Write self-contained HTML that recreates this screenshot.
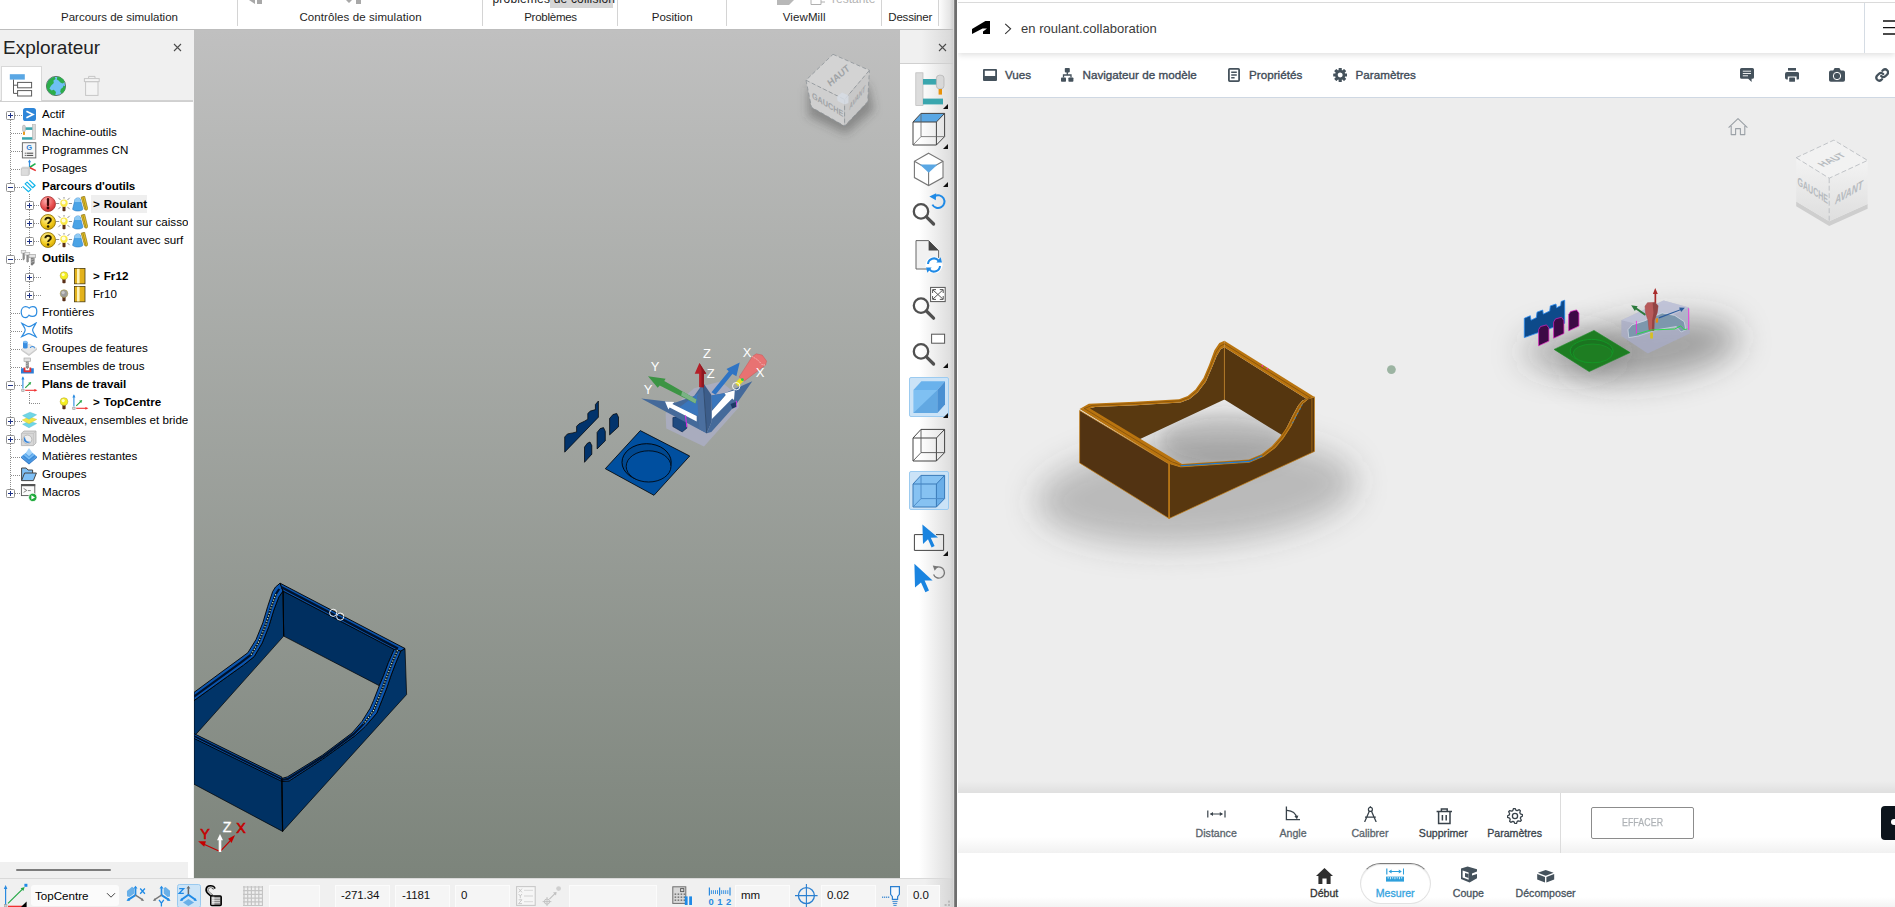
<!DOCTYPE html>
<html lang="fr">
<head>
<meta charset="utf-8">
<title>PowerMill - en roulant.collaboration</title>
<style>
*{box-sizing:border-box;margin:0;padding:0}
html,body{width:1895px;height:907px;overflow:hidden;background:#fff}
body{position:relative;font-family:"Liberation Sans","DejaVu Sans",sans-serif;font-size:12px;color:#000}
.abs{position:absolute}
.t{position:absolute;white-space:nowrap;line-height:1}
/* ---------- left application ---------- */
#ribbon{position:absolute;left:0;top:0;width:953px;height:30px;background:linear-gradient(90deg,#fff 0,#fff 938px,#dedede 953px);border-bottom:1px solid #bdbdbd;overflow:hidden}
#ribbon .sep{position:absolute;top:0;width:1px;height:26px;background:#d4d4d4}
#ribbon .lbl{position:absolute;top:10px;font-size:11.5px;line-height:14px;color:#1e1e1e;white-space:nowrap;text-align:center}
#ribbon .clip{position:absolute;top:-8.5px;font-size:12px;line-height:14px;white-space:nowrap}
#explorer{position:absolute;left:0;top:30px;width:194px;height:848px;background:#f0f0f0}
#tree{position:absolute;left:0;top:71px;width:193px;height:777px;background:#fff;border-top:1px solid #d0d0d0;overflow:hidden}
#viewport{position:absolute;left:194px;top:30px;width:706px;height:848px;background:linear-gradient(#c0c0c0,#7c847b);overflow:hidden}
#vtool{position:absolute;left:900px;top:30px;width:53px;height:848px;background:linear-gradient(90deg,#fff 0,#fff 36%,#dbdbdb 100%)}
#status{position:absolute;left:0;top:878px;width:953px;height:29px;background:linear-gradient(90deg,#f0f0f0 0,#f0f0f0 925px,#d6d6d6 953px);box-shadow:inset 0 1px 0 #d9d9d9}
#winedge{position:absolute;left:950px;top:0;width:8px;height:907px;background:linear-gradient(90deg,rgba(200,200,200,0) 0,rgba(200,200,200,.8) 50%,#6e6e6e 58%,#6e6e6e 88%,#fff 92%)}
/* ---------- right pane (viewer) ---------- */
#viewer{position:absolute;left:958px;top:0;width:937px;height:907px;background:#ededed;overflow:hidden;font-family:"Liberation Sans","DejaVu Sans",sans-serif}
#vhead{position:absolute;left:0;top:0;width:937px;height:53px;background:#fff;border-top:3px solid #fff;box-shadow:0 2px 6px rgba(0,0,0,.13);z-index:3}
#vbar{position:absolute;left:0;top:53px;width:937px;height:45px;background:#fff;border-bottom:1px solid #cfd8e3;z-index:2}
#canvas{position:absolute;left:0;top:98px;width:937px;height:695px;background:#ededed}
#mbar{position:absolute;left:0;top:793px;width:937px;height:60px;background:#fff;z-index:2}
#nav{position:absolute;left:0;top:853px;width:937px;height:54px;background:#fff;z-index:2}
.hd{position:absolute;height:1px;background-image:linear-gradient(90deg,#8c8c8c 50%,transparent 50%);background-size:2px 1px}
.vd{position:absolute;width:1px;background-image:linear-gradient(#8c8c8c 50%,transparent 50%);background-size:1px 2px}
.tt{position:absolute;white-space:nowrap;font-size:11.6px;line-height:18px;height:18px;color:#000;margin-top:-.5px}
.tt.b{font-weight:700;font-size:11.6px;letter-spacing:-.06px}
.sf{position:absolute;top:7px;height:23px;background:#f5f5f5;border:1px solid #fbfbfb;border-bottom:none;font-size:11.5px;line-height:19px;letter-spacing:-.1px;white-space:nowrap;color:#111}
.vb{font-size:11.65px;color:#3f4b57;-webkit-text-stroke:.35px #3f4b57;letter-spacing:.02px}
.mb{font-size:10.6px;text-align:center}
</style>
</head>
<body>

<!-- ================= LEFT: PowerMill ================= -->
<div id="ribbon">
  <div class="sep" style="left:237px"></div>
  <div class="sep" style="left:482px"></div>
  <div class="sep" style="left:617px"></div>
  <div class="sep" style="left:726px"></div>
  <div class="sep" style="left:881px"></div>
  <div class="sep" style="left:938px"></div>
  <div class="lbl" style="left:59.5px;width:120px">Parcours de simulation</div>
  <div class="lbl" style="left:295.5px;width:130px;letter-spacing:.09px">Contrôles de simulation</div>
  <div class="lbl" style="left:520.5px;width:60px;letter-spacing:-.25px">Problèmes</div>
  <div class="lbl" style="left:642.2px;width:60px">Position</div>
  <div class="lbl" style="left:774.2px;width:60px;letter-spacing:.1px">ViewMill</div>
  <div class="lbl" style="left:880.2px;width:60px;letter-spacing:-.2px">Dessiner</div>
  <!-- clipped upper row of the ribbon -->
  <div class="abs" style="left:550px;top:0;width:63px;height:8px;background:#d6d6d6"></div>
  <div class="clip" style="left:492.5px;color:#222;letter-spacing:.18px">problèmes de collision</div>
  <div class="clip" style="left:832px;color:#b4b4b4">restante</div>
  <div class="clip" style="left:266px;color:#b4b4b4;top:-11px">Retour</div>
  <svg class="abs" style="left:249px;top:0" width="14" height="5" viewBox="0 0 14 5"><path d="M0 0L6 4V0ZM8 0H13V4H8Z" fill="#a8a8a8"/></svg>
  <svg class="abs" style="left:345px;top:0" width="18" height="5" viewBox="0 0 18 5"><path d="M1 0L4 3 7 0ZM11 0H16V4H11Z" fill="#a8a8a8"/></svg>
  <svg class="abs" style="left:777px;top:0" width="18" height="6" viewBox="0 0 18 6"><path d="M0 0H17L12 5H0Z" fill="#b8b8b8"/></svg>
  <svg class="abs" style="left:810px;top:0" width="16" height="6" viewBox="0 0 16 6"><path d="M1 0V4.5H11V0M11 2H15" fill="none" stroke="#b0b0b0" stroke-width="1"/></svg>
</div>

<div id="explorer">
  <div class="t" style="left:3px;top:8px;font-size:19px;color:#222">Explorateur</div>
  <div id="tree"></div>
<svg class="abs" style="left:173px;top:13px" width="9" height="9" viewBox="0 0 9 9"><path d="M1 1L8 8M8 1L1 8" stroke="#4c4c4c" stroke-width="1.1"/></svg>
<div class="abs" style="left:0;top:70px;width:193px;height:1px;background:#d2d2d2"></div>
<div class="abs" style="left:1px;top:36px;width:41px;height:35px;background:#fff;border:1px solid #d8d8d8;border-bottom:none"></div>
<svg class="abs" style="left:8px;top:42px" width="26" height="26" viewBox="0 0 26 26"><rect x="1.8" y="2.2" width="15" height="5.4" fill="#5aa7e4"/><path d="M5.5 7.6V21.4H9.6M5.5 13.2H9.6" fill="none" stroke="#5a5a5a" stroke-width="1"/><rect x="9.6" y="10.4" width="14" height="5.4" fill="#fff" stroke="#5a5a5a" stroke-width="1"/><rect x="9.6" y="18.6" width="14" height="5.4" fill="#fff" stroke="#5a5a5a" stroke-width="1"/></svg>
<svg class="abs" style="left:45px;top:45px" width="22" height="22" viewBox="0 0 22 22"><circle cx="11" cy="11" r="9.6" fill="#6ec0f4" stroke="#5a6a60" stroke-width=".9"/><path d="M3.2 6.2C5 3.6 7.4 2.2 9.6 1.8L10.6 4 8.4 5.6 8.8 8 6.2 10.4 4.4 13.4 6.6 15.4 8.8 14.8 11 17 10.2 20.4C5.8 20 1.8 16.4 1.6 11.6 1.6 9.6 2.2 7.6 3.2 6.2Z" fill="#2cad4a"/><path d="M12.4 1.6C15.6 2 18.4 3.8 19.8 7L17.6 8.6 15.4 7.6 13.6 5.4 11.8 4.6Z" fill="#2cad4a"/><path d="M20.4 11.4C20.4 14.4 19.2 17 17 18.6L15.2 17 15.8 14 17.8 12.4 18.6 10.4Z" fill="#2cad4a"/></svg>
<svg class="abs" style="left:83px;top:45px" width="18" height="22" viewBox="0 0 18 22"><path d="M5.6 3.4V1.4H12V3.4" fill="none" stroke="#c6c6c6" stroke-width="1"/><rect x="1.4" y="3.6" width="14.8" height="3" fill="#f4f4f4" stroke="#c6c6c6" stroke-width="1"/><rect x="2.6" y="6.8" width="12.4" height="13.6" fill="#f4f4f4" stroke="#c6c6c6" stroke-width="1"/></svg>
<div class="abs" style="left:0;top:832px;width:188px;height:16px;background:#f0f0f0"></div>
<div class="abs" style="left:16px;top:839px;width:95px;height:2px;background:#7c7c7c;border-radius:1px"></div>
<div class="abs" style="left:0;top:0;width:188px;height:832px;overflow:hidden">
<div class="vd" style="left:10px;top:90px;height:369px"></div>
<div class="hd" style="left:15px;top:85px;width:7px"></div>
<div class="hd" style="left:15px;top:157px;width:7px"></div>
<div class="hd" style="left:15px;top:229px;width:7px"></div>
<div class="hd" style="left:15px;top:355px;width:7px"></div>
<div class="hd" style="left:15px;top:391px;width:7px"></div>
<div class="hd" style="left:15px;top:409px;width:7px"></div>
<div class="hd" style="left:15px;top:463px;width:7px"></div>
<div class="hd" style="left:11px;top:103px;width:11px"></div>
<div class="hd" style="left:11px;top:121px;width:11px"></div>
<div class="hd" style="left:11px;top:139px;width:11px"></div>
<div class="hd" style="left:11px;top:283px;width:11px"></div>
<div class="hd" style="left:11px;top:301px;width:11px"></div>
<div class="hd" style="left:11px;top:319px;width:11px"></div>
<div class="hd" style="left:11px;top:337px;width:11px"></div>
<div class="hd" style="left:11px;top:427px;width:11px"></div>
<div class="hd" style="left:11px;top:445px;width:11px"></div>
<div class="vd" style="left:29px;top:164px;height:43px"></div>
<div class="vd" style="left:29px;top:236px;height:25px"></div>
<div class="hd" style="left:34px;top:175px;width:6px"></div>
<div class="hd" style="left:34px;top:193px;width:6px"></div>
<div class="hd" style="left:34px;top:211px;width:6px"></div>
<div class="hd" style="left:34px;top:247px;width:7px"></div>
<div class="hd" style="left:34px;top:265px;width:7px"></div>
<div class="vd" style="left:29px;top:362px;height:11px"></div>
<div class="hd" style="left:29px;top:373px;width:12px"></div>
<svg class="abs" style="left:6px;top:81px" width="9" height="9" viewBox="0 0 9 9" ><rect x="0.5" y="0.5" width="8" height="8" rx="1" fill="#fff" stroke="#919191"/><path d="M2 4.5H7" stroke="#1e3287" stroke-width="1"/><path d="M4.5 2V7" stroke="#1e3287" stroke-width="1"/></svg>
<svg class="abs" style="left:6px;top:153px" width="9" height="9" viewBox="0 0 9 9" ><rect x="0.5" y="0.5" width="8" height="8" rx="1" fill="#fff" stroke="#919191"/><path d="M2 4.5H7" stroke="#1e3287" stroke-width="1"/></svg>
<svg class="abs" style="left:6px;top:225px" width="9" height="9" viewBox="0 0 9 9" ><rect x="0.5" y="0.5" width="8" height="8" rx="1" fill="#fff" stroke="#919191"/><path d="M2 4.5H7" stroke="#1e3287" stroke-width="1"/></svg>
<svg class="abs" style="left:6px;top:351px" width="9" height="9" viewBox="0 0 9 9" ><rect x="0.5" y="0.5" width="8" height="8" rx="1" fill="#fff" stroke="#919191"/><path d="M2 4.5H7" stroke="#1e3287" stroke-width="1"/></svg>
<svg class="abs" style="left:6px;top:387px" width="9" height="9" viewBox="0 0 9 9" ><rect x="0.5" y="0.5" width="8" height="8" rx="1" fill="#fff" stroke="#919191"/><path d="M2 4.5H7" stroke="#1e3287" stroke-width="1"/><path d="M4.5 2V7" stroke="#1e3287" stroke-width="1"/></svg>
<svg class="abs" style="left:6px;top:405px" width="9" height="9" viewBox="0 0 9 9" ><rect x="0.5" y="0.5" width="8" height="8" rx="1" fill="#fff" stroke="#919191"/><path d="M2 4.5H7" stroke="#1e3287" stroke-width="1"/><path d="M4.5 2V7" stroke="#1e3287" stroke-width="1"/></svg>
<svg class="abs" style="left:6px;top:459px" width="9" height="9" viewBox="0 0 9 9" ><rect x="0.5" y="0.5" width="8" height="8" rx="1" fill="#fff" stroke="#919191"/><path d="M2 4.5H7" stroke="#1e3287" stroke-width="1"/><path d="M4.5 2V7" stroke="#1e3287" stroke-width="1"/></svg>
<svg class="abs" style="left:25px;top:171px" width="9" height="9" viewBox="0 0 9 9" ><rect x="0.5" y="0.5" width="8" height="8" rx="1" fill="#fff" stroke="#919191"/><path d="M2 4.5H7" stroke="#1e3287" stroke-width="1"/><path d="M4.5 2V7" stroke="#1e3287" stroke-width="1"/></svg>
<svg class="abs" style="left:25px;top:189px" width="9" height="9" viewBox="0 0 9 9" ><rect x="0.5" y="0.5" width="8" height="8" rx="1" fill="#fff" stroke="#919191"/><path d="M2 4.5H7" stroke="#1e3287" stroke-width="1"/><path d="M4.5 2V7" stroke="#1e3287" stroke-width="1"/></svg>
<svg class="abs" style="left:25px;top:207px" width="9" height="9" viewBox="0 0 9 9" ><rect x="0.5" y="0.5" width="8" height="8" rx="1" fill="#fff" stroke="#919191"/><path d="M2 4.5H7" stroke="#1e3287" stroke-width="1"/><path d="M4.5 2V7" stroke="#1e3287" stroke-width="1"/></svg>
<svg class="abs" style="left:25px;top:243px" width="9" height="9" viewBox="0 0 9 9" ><rect x="0.5" y="0.5" width="8" height="8" rx="1" fill="#fff" stroke="#919191"/><path d="M2 4.5H7" stroke="#1e3287" stroke-width="1"/><path d="M4.5 2V7" stroke="#1e3287" stroke-width="1"/></svg>
<svg class="abs" style="left:25px;top:261px" width="9" height="9" viewBox="0 0 9 9" ><rect x="0.5" y="0.5" width="8" height="8" rx="1" fill="#fff" stroke="#919191"/><path d="M2 4.5H7" stroke="#1e3287" stroke-width="1"/><path d="M4.5 2V7" stroke="#1e3287" stroke-width="1"/></svg>
<svg class="abs" style="left:23px;top:78px" width="13" height="13" viewBox="0 0 13 13" ><rect width="13" height="13" rx="2.6" fill="#2e86d9"/><path d="M3.4 3.2L10 6.5 3.4 9.8" fill="none" stroke="#fff" stroke-width="1.7"/></svg>
<div class="tt" style="left:42px;top:75px">Actif</div>
<svg class="abs" style="left:21px;top:94px" width="16" height="16" viewBox="0 0 16 16" ><rect x="11.3" y=".4" width="3.1" height="15.2" fill="#d9d9d9" stroke="#b4b4b4" stroke-width=".6"/><rect x="4.3" y="3.3" width="7" height="2.6" fill="#3aa6ae"/><rect x="1" y="13.2" width="10.3" height="2.5" fill="#3aa6ae"/><rect x="1.6" y="1.3" width="2.7" height="6.4" rx="1.1" fill="#d4d4d4" stroke="#a8a8a8" stroke-width=".6"/><rect x="2.1" y="7.8" width="1.8" height="3.1" fill="#e8920a"/></svg>
<div class="tt" style="left:42px;top:93px">Machine-outils</div>
<svg class="abs" style="left:21px;top:112px" width="16" height="17" viewBox="0 0 16 17" ><rect x="1.4" y=".7" width="13.4" height="15.2" fill="#f6f6f6" stroke="#6e6e6e" stroke-width="1"/><text x="8.2" y="8.4" font-family="Liberation Sans,sans-serif" font-size="7.5" font-weight="700" fill="#2a7fd4" text-anchor="middle">G</text><path d="M5.6 11.2H12.2M5.6 13.4H12.2" stroke="#444" stroke-width="1"/><path d="M3.8 11.2H4.8M3.8 13.4H4.8" stroke="#444" stroke-width="1"/></svg>
<div class="tt" style="left:42px;top:111px">Programmes CN</div>
<svg class="abs" style="left:20px;top:129px" width="18" height="18" viewBox="0 0 18 18" ><path d="M9.5 8.5V1.8" stroke="#2a8ae0" stroke-width="1.2"/><path d="M8 3.2L9.5 .4 11 3.2Z" fill="#2a8ae0"/><path d="M9.5 8.5L15.5 4.6" stroke="#20b050" stroke-width="1.6"/><path d="M9.5 8.5L15.8 11.6" stroke="#e83030" stroke-width="1.6"/><path d="M1.2 9.4L2.6 8.2H9.6V15L8.4 16.4H1.2Z" fill="#dcdcdc" stroke="#b8b8b8" stroke-width=".6"/><path d="M1.2 9.4H8.4V16.4M8.4 9.4L9.6 8.2" fill="none" stroke="#c4c4c4" stroke-width=".6"/></svg>
<div class="tt" style="left:42px;top:129px">Posages</div>
<svg class="abs" style="left:22px;top:148px" width="16" height="16" viewBox="0 0 16 16" ><path d="M.63 8.38L6.58 13.67 8.96 11.42 3.14 5.86 5.13 4.14 10.68 9.7 13.06 7.45 7.38 2.16" fill="none" stroke="#12b5ea" stroke-width="1.25" stroke-linejoin="round"/></svg>
<div class="tt b" style="left:42px;top:147px">Parcours d'outils</div>
<svg class="abs" style="left:20px;top:220px" width="17" height="17" viewBox="0 0 17 17" ><rect x="1.2" y=".5" width="4.6" height="2.6" fill="#eee" stroke="#aaa" stroke-width=".6"/><path d="M2.6 3.1H4.8V9L3.4 10.6 2.6 9.4Z" fill="#8c8c8c"/><rect x="4.8" y="2.4" width="5" height="2.6" fill="#eee" stroke="#aaa" stroke-width=".6"/><path d="M6.4 5H8.8V11.2L7.4 12.8 6.4 11.6Z" fill="#8c8c8c"/><rect x="9" y="4.4" width="6.6" height="3.4" fill="#e4e4e4" stroke="#999" stroke-width=".6"/><path d="M10.8 7.8H14.6V13.2L12 15.8 10.8 14.4Z" fill="#7c7c7c"/><path d="M11 10L14.4 8.6M11 12.4L14.4 11" stroke="#ccc" stroke-width=".6"/></svg>
<div class="tt b" style="left:42px;top:219px">Outils</div>
<svg class="abs" style="left:20px;top:275px" width="18" height="14" viewBox="0 0 18 14" ><path d="M5.6 1.6C7.4 1.6 8.4 2.4 9.2 3.2 10 2.2 11.2 1.6 12.8 1.6 15.2 1.6 16.8 3.4 16.8 6.4 16.8 9.6 14.8 11.4 12.4 11.4 11 11.4 10 11 9 10.2 8 11.8 6.8 12.6 5.2 12.6 2.8 12.6 1.2 10.4 1.2 7 1.2 3.8 3.2 1.6 5.6 1.6Z" fill="none" stroke="#2b8be0" stroke-width="1.2"/></svg>
<div class="tt" style="left:42px;top:273px">Frontières</div>
<svg class="abs" style="left:20px;top:292px" width="18" height="16" viewBox="0 0 18 16" ><path d="M1.8 1.2C5 2.6 6.8 4.6 9 4.6 11.4 4.6 13 2.6 16 1 14.6 4 12.6 6.2 12.6 8 12.6 10 14.8 12.4 16.2 15 13 13.6 11 11.6 9 11.6 6.8 11.6 5 13.6 1.6 14.8 3.2 12 5.2 10 5.2 8 5.2 6 3.2 4 1.8 1.2Z" fill="none" stroke="#2b8be0" stroke-width="1.2"/></svg>
<div class="tt" style="left:42px;top:291px">Motifs</div>
<svg class="abs" style="left:20px;top:309px" width="18" height="18" viewBox="0 0 18 18" ><path d="M1.4 10.4L9 5 17 9.4 9 15.4Z" fill="#e8e8e8" stroke="#c4c4c4" stroke-width=".5"/><path d="M1.4 10.4V11.8L9 17 17 10.8V9.4L9 15.4Z" fill="#c8c8c8"/><path d="M3 3V8.4C3 9.8 7.6 9.8 7.6 8.4V3Z" fill="#3a8ee0"/><ellipse cx="5.3" cy="3" rx="2.3" ry="1.2" fill="#7cbcf4"/><path d="M10.4 9C10.4 7 14.4 7 14.6 9.2" fill="none" stroke="#3a8ee0" stroke-width="1.1"/></svg>
<div class="tt" style="left:42px;top:309px">Groupes de features</div>
<svg class="abs" style="left:20px;top:327px" width="16" height="18" viewBox="0 0 16 18" ><rect x="4" y="1" width="6.6" height="3.6" fill="#e0e0e0" stroke="#a0a0a0" stroke-width=".6"/><path d="M5.8 4.6H8.9V10.2L7.3 12.2 5.8 10.2Z" fill="#8a8a8a"/><path d="M6 6.6L8.8 5.6M6 8.8L8.8 7.8" stroke="#d0d0d0" stroke-width=".6"/><path d="M1 11.2H4.2V13.6H10.6V11.2H13.8V16.6H1Z" fill="#2b7fd8"/><path d="M3.6 10.6H5.4V13.4H9.4V10.6H11.2V15.2H3.6Z" fill="#e83030"/></svg>
<div class="tt" style="left:42px;top:327px">Ensembles de trous</div>
<svg class="abs" style="left:20.5px;top:346px" width="17" height="17" viewBox="0 0 17 17" ><path d="M1.9 12.6V1.6" stroke="#2a8ae0" stroke-width="1.1"/><path d="M.4 3.4L1.9 .2 3.4 3.4Z" fill="#2a8ae0"/><path d="M4.2 14.3H14.4" stroke="#f03030" stroke-width="1.1"/><path d="M13.4 12.9L16.4 14.3 13.4 15.7Z" fill="#f03030"/><path d="M4.3 11.9L8.6 7.6" stroke="#20a040" stroke-width="1.1"/><path d="M7.2 6.8L10.2 5.9 9.3 8.9Z" fill="#20a040"/><rect x=".7" y="13.2" width="2.4" height="2.4" fill="#d8d8d8" stroke="#999" stroke-width=".6"/></svg>
<div class="tt b" style="left:42px;top:345px">Plans de travail</div>
<svg class="abs" style="left:21px;top:381px" width="17" height="18" viewBox="0 0 17 18" ><path d="M1.6 13.2L8.6 10.2 15.6 12.6 8 16.8Z" fill="#6fd6e6" stroke="#48b8cc" stroke-width=".4"/><path d="M1.2 9L8.4 5.8 15.8 8.4 8 12.8Z" fill="#f2e644" stroke="#cfc030" stroke-width=".4"/><path d="M1.6 4.6L9 1.2 15.6 3.8 8 8.2Z" fill="#6fd6e6" stroke="#48b8cc" stroke-width=".4"/></svg>
<div class="tt" style="left:42px;top:381px">Niveaux, ensembles et bride</div>
<svg class="abs" style="left:20px;top:400px" width="18" height="17" viewBox="0 0 18 17" ><path d="M1.4 3.4L4 1H16V13L13.4 15.6H1.4Z" fill="#d8d8d8" stroke="#a8a8a8" stroke-width=".7"/><path d="M1.4 3.4H13.4V15.6M13.4 3.4L16 1" fill="none" stroke="#b8b8b8" stroke-width=".6"/><circle cx="7.4" cy="9.5" r="4.4" fill="#f0f0f0" stroke="#a0a0a0" stroke-width=".6"/><path d="M5 6.8C5 10.2 7 12.2 10.6 11.8 9.6 13.4 5.6 13.6 4.2 11 3.4 9.4 4 7.6 5 6.8Z" fill="#3a86d8"/></svg>
<div class="tt" style="left:42px;top:399px">Modèles</div>
<svg class="abs" style="left:20px;top:417px" width="18" height="18" viewBox="0 0 18 18" ><path d="M1.2 9.6L9 3.4 17 9.4 9 16.8Z" fill="#4a9ae4"/><path d="M1.2 9.6V11L9 17.6 17 10.8V9.4L9 16.2Z" fill="#2f78c8"/><path d="M3.4 8L9 3.4 14.8 7.8 9 12.8Z" fill="#78bcf4"/><path d="M3.4 8V9.6L9 14.4 14.8 9.4V7.8L9 12.8Z" fill="#3f8cd8"/><path d="M5.6 6.2L9 1 12.6 6 9 9.2Z" fill="#a4d4fa"/><path d="M5.6 6.2V7.6L9 10.8 12.6 7.4V6L9 9.2Z" fill="#5aa4e8"/></svg>
<div class="tt" style="left:42px;top:417px">Matières restantes</div>
<svg class="abs" style="left:20px;top:437px" width="18" height="15" viewBox="0 0 18 15" ><path d="M1.6 13.6V1H6.2L8 3H12.6V6" fill="#7fc0f6" stroke="#444" stroke-width="1"/><path d="M1.6 13.6L4.6 6H16.4L13.4 13.6Z" fill="#7fc0f6" stroke="#444" stroke-width="1"/></svg>
<div class="tt" style="left:42px;top:435px">Groupes</div>
<svg class="abs" style="left:20px;top:453px" width="18" height="19" viewBox="0 0 18 19" ><rect x="1.4" y="1.6" width="13.4" height="11" fill="#fbfbfb" stroke="#555" stroke-width=".9"/><rect x="1" y="1" width="14.2" height="2.2" fill="#555"/><path d="M3.6 5.4L6.8 7.4 3.6 9.4M7.8 7.6H10.8" fill="none" stroke="#777" stroke-width=".9"/><circle cx="12.8" cy="14.4" r="4.2" fill="#1faa3c" stroke="#fff" stroke-width=".8"/><path d="M11.4 12.2L15 14.4 11.4 16.6Z" fill="#fff"/></svg>
<div class="tt" style="left:42px;top:453px">Macros</div>
<svg class="abs" style="left:40px;top:165.5px" width="16" height="16" viewBox="0 0 16 16" ><defs><radialGradient id="gE195" cx=".4" cy=".3" r=".8"><stop offset="0" stop-color="#ffb0b0"/><stop offset=".6" stop-color="#e85050"/><stop offset="1" stop-color="#c02828"/></radialGradient></defs><circle cx="8" cy="8" r="7.5" fill="url(#gE195)" stroke="#a83030" stroke-width=".8"/><path d="M8 3.2V9" stroke="#3a0808" stroke-width="2.3" stroke-linecap="round"/><circle cx="8" cy="12" r="1.4" fill="#3a0808"/></svg>
<svg class="abs" style="left:56px;top:167.4px" width="16" height="16" viewBox="0 0 16 16" ><path d="M12.8 6.5L16.0 6.5" stroke="#777" stroke-width=".8"/><path d="M11.4 9.9L13.7 12.2" stroke="#777" stroke-width=".8"/><path d="M4.6 9.9L2.3 12.2" stroke="#777" stroke-width=".8"/><path d="M3.2 6.5L0.0 6.5" stroke="#777" stroke-width=".8"/><path d="M4.6 3.1L2.3 0.8" stroke="#777" stroke-width=".8"/><path d="M8.0 1.7L8.0 -1.5" stroke="#777" stroke-width=".8"/><path d="M11.4 3.1L13.7 0.8" stroke="#777" stroke-width=".8"/><rect x="6.5" y="9" width="3" height="5.2" rx=".8" fill="#5a3018"/><circle cx="8" cy="6.3" r="3.7" fill="#fbe94a"/><circle cx="7.6" cy="5.6" r="2" fill="#fffde0"/></svg>
<svg class="abs" style="left:72px;top:166px" width="16" height="16" viewBox="0 0 16 16" ><path d="M.6 13.2L3 3.6C3.6 1.8 7.6 1.2 8.2 3L11 13.2C9.5 15.6 2 15.6 .6 13.2Z" fill="#4aa3e6" stroke="#2c7cc4" stroke-width=".6"/><path d="M3 3.6C3.6 1.8 7.6 1.2 8.2 3L9 6 2.4 6Z" fill="#8fcaf4"/><path d="M9.2 1.2L12.6 .2 15.6 12.4C15.8 14.2 13.2 14.8 12.6 13.2Z" fill="#e8c428" stroke="#8a7010" stroke-width=".7"/><path d="M10.9 1L14 13.6" stroke="#8a7010" stroke-width=".6"/></svg>
<div class="abs" style="left:91px;top:165px;width:56px;height:18px;background:#efefef"></div><div class="tt b" style="left:93px;top:165px;word-spacing:.6px;letter-spacing:.05px">&gt; Roulant</div>
<svg class="abs" style="left:40px;top:183.5px" width="16" height="16" viewBox="0 0 16 16" ><defs><radialGradient id="gQ213" cx=".4" cy=".3" r=".8"><stop offset="0" stop-color="#fff3a0"/><stop offset=".6" stop-color="#f0c818"/><stop offset="1" stop-color="#c89a00"/></radialGradient></defs><circle cx="8" cy="8" r="7.5" fill="url(#gQ213)" stroke="#8a6c00" stroke-width=".8"/><path d="M5.4 6.2C5.4 3 10.8 3 10.8 6 10.8 7.9 8.1 8 8.1 10" fill="none" stroke="#2a2000" stroke-width="2"/><circle cx="8.1" cy="12.5" r="1.25" fill="#2a2000"/></svg>
<svg class="abs" style="left:56px;top:185.4px" width="16" height="16" viewBox="0 0 16 16" ><path d="M12.8 6.5L16.0 6.5" stroke="#777" stroke-width=".8"/><path d="M11.4 9.9L13.7 12.2" stroke="#777" stroke-width=".8"/><path d="M4.6 9.9L2.3 12.2" stroke="#777" stroke-width=".8"/><path d="M3.2 6.5L0.0 6.5" stroke="#777" stroke-width=".8"/><path d="M4.6 3.1L2.3 0.8" stroke="#777" stroke-width=".8"/><path d="M8.0 1.7L8.0 -1.5" stroke="#777" stroke-width=".8"/><path d="M11.4 3.1L13.7 0.8" stroke="#777" stroke-width=".8"/><rect x="6.5" y="9" width="3" height="5.2" rx=".8" fill="#5a3018"/><circle cx="8" cy="6.3" r="3.7" fill="#fbe94a"/><circle cx="7.6" cy="5.6" r="2" fill="#fffde0"/></svg>
<svg class="abs" style="left:72px;top:184px" width="16" height="16" viewBox="0 0 16 16" ><path d="M.6 13.2L3 3.6C3.6 1.8 7.6 1.2 8.2 3L11 13.2C9.5 15.6 2 15.6 .6 13.2Z" fill="#4aa3e6" stroke="#2c7cc4" stroke-width=".6"/><path d="M3 3.6C3.6 1.8 7.6 1.2 8.2 3L9 6 2.4 6Z" fill="#8fcaf4"/><path d="M9.2 1.2L12.6 .2 15.6 12.4C15.8 14.2 13.2 14.8 12.6 13.2Z" fill="#e8c428" stroke="#8a7010" stroke-width=".7"/><path d="M10.9 1L14 13.6" stroke="#8a7010" stroke-width=".6"/></svg>
<div class="tt" style="left:93px;top:183px">Roulant sur caisso</div>
<svg class="abs" style="left:40px;top:201.5px" width="16" height="16" viewBox="0 0 16 16" ><defs><radialGradient id="gQ231" cx=".4" cy=".3" r=".8"><stop offset="0" stop-color="#fff3a0"/><stop offset=".6" stop-color="#f0c818"/><stop offset="1" stop-color="#c89a00"/></radialGradient></defs><circle cx="8" cy="8" r="7.5" fill="url(#gQ231)" stroke="#8a6c00" stroke-width=".8"/><path d="M5.4 6.2C5.4 3 10.8 3 10.8 6 10.8 7.9 8.1 8 8.1 10" fill="none" stroke="#2a2000" stroke-width="2"/><circle cx="8.1" cy="12.5" r="1.25" fill="#2a2000"/></svg>
<svg class="abs" style="left:56px;top:203.4px" width="16" height="16" viewBox="0 0 16 16" ><path d="M12.8 6.5L16.0 6.5" stroke="#777" stroke-width=".8"/><path d="M11.4 9.9L13.7 12.2" stroke="#777" stroke-width=".8"/><path d="M4.6 9.9L2.3 12.2" stroke="#777" stroke-width=".8"/><path d="M3.2 6.5L0.0 6.5" stroke="#777" stroke-width=".8"/><path d="M4.6 3.1L2.3 0.8" stroke="#777" stroke-width=".8"/><path d="M8.0 1.7L8.0 -1.5" stroke="#777" stroke-width=".8"/><path d="M11.4 3.1L13.7 0.8" stroke="#777" stroke-width=".8"/><rect x="6.5" y="9" width="3" height="5.2" rx=".8" fill="#5a3018"/><circle cx="8" cy="6.3" r="3.7" fill="#fbe94a"/><circle cx="7.6" cy="5.6" r="2" fill="#fffde0"/></svg>
<svg class="abs" style="left:72px;top:202px" width="16" height="16" viewBox="0 0 16 16" ><path d="M.6 13.2L3 3.6C3.6 1.8 7.6 1.2 8.2 3L11 13.2C9.5 15.6 2 15.6 .6 13.2Z" fill="#4aa3e6" stroke="#2c7cc4" stroke-width=".6"/><path d="M3 3.6C3.6 1.8 7.6 1.2 8.2 3L9 6 2.4 6Z" fill="#8fcaf4"/><path d="M9.2 1.2L12.6 .2 15.6 12.4C15.8 14.2 13.2 14.8 12.6 13.2Z" fill="#e8c428" stroke="#8a7010" stroke-width=".7"/><path d="M10.9 1L14 13.6" stroke="#8a7010" stroke-width=".6"/></svg>
<div class="tt" style="left:93px;top:201px">Roulant avec surf</div>
<svg class="abs" style="left:59px;top:241px" width="10" height="13" viewBox="0 0 10 13" ><rect x="3.4" y="7.5" width="3.2" height="4.8" rx=".8" fill="#5a3018"/><circle cx="5" cy="4.6" r="3.9" fill="#f4ee20" stroke="#b0a040" stroke-width=".5"/><circle cx="4.2" cy="3.6" r="1.6" fill="#ffffc0"/></svg>
<svg class="abs" style="left:74px;top:238px" width="12" height="16.5" viewBox="0 0 12 16.5" ><rect x=".4" y=".4" width="10.6" height="15.4" fill="#e3b21c" stroke="#4a3c10" stroke-width=".8"/><rect x="3" y=".8" width="2.6" height="14.6" fill="#fff4b8"/></svg>
<div class="tt b" style="left:93px;top:237px;word-spacing:.6px;letter-spacing:.05px">&gt; Fr12</div>
<svg class="abs" style="left:59px;top:259px" width="10" height="13" viewBox="0 0 10 13" ><rect x="3.4" y="7.5" width="3.2" height="4.8" rx=".8" fill="#5a3018"/><circle cx="5" cy="4.6" r="3.9" fill="#9c9c9c" stroke="#b0a040" stroke-width=".5"/><circle cx="4.2" cy="3.6" r="1.6" fill="#c8c8c8"/></svg>
<svg class="abs" style="left:74px;top:256px" width="12" height="16.5" viewBox="0 0 12 16.5" ><rect x=".4" y=".4" width="10.6" height="15.4" fill="#e3b21c" stroke="#4a3c10" stroke-width=".8"/><rect x="3" y=".8" width="2.6" height="14.6" fill="#fff4b8"/></svg>
<div class="tt" style="left:93px;top:255px">Fr10</div>
<svg class="abs" style="left:59px;top:367px" width="10" height="13" viewBox="0 0 10 13" ><rect x="3.4" y="7.5" width="3.2" height="4.8" rx=".8" fill="#5a3018"/><circle cx="5" cy="4.6" r="3.9" fill="#f4ee20" stroke="#b0a040" stroke-width=".5"/><circle cx="4.2" cy="3.6" r="1.6" fill="#ffffc0"/></svg>
<svg class="abs" style="left:71.5px;top:364px" width="17" height="17" viewBox="0 0 17 17" ><path d="M1.9 12.6V1.6" stroke="#2a8ae0" stroke-width="1.1"/><path d="M.4 3.4L1.9 .2 3.4 3.4Z" fill="#2a8ae0"/><path d="M4.2 14.3H14.4" stroke="#f03030" stroke-width="1.1"/><path d="M13.4 12.9L16.4 14.3 13.4 15.7Z" fill="#f03030"/><path d="M4.3 11.9L8.6 7.6" stroke="#20a040" stroke-width="1.1"/><path d="M7.2 6.8L10.2 5.9 9.3 8.9Z" fill="#20a040"/><rect x=".7" y="13.2" width="2.4" height="2.4" fill="#d8d8d8" stroke="#999" stroke-width=".6"/></svg>
<div class="tt b" style="left:93px;top:363px;word-spacing:.6px;letter-spacing:.05px">&gt; TopCentre</div>
</div>
</div>

<div id="viewport"><svg class="abs" style="left:0;top:0" width="706" height="848" viewBox="194 30 706 848"><defs><filter id="cubsh" x="-50%" y="-50%" width="200%" height="200%"><feGaussianBlur stdDeviation="5"/></filter></defs><polygon points="808.0,88.0 868.0,84.0 874.0,110.0 846.0,134.0 808.0,116.0" fill="rgba(60,60,60,.4)" filter="url(#cubsh)"/><polygon points="833.0,54.3 869.4,70.3 844.6,99.5 806.0,80.2" fill="#d3d3d3" /><polygon points="806.0,80.2 844.6,99.5 844.6,126.0 811.5,107.3" fill="#cfcfcf" /><polygon points="844.6,99.5 869.4,70.3 867.7,101.7 844.6,126.0" fill="#c8c8c8" /><polyline points="833.0,54.3 869.4,70.3 867.7,101.7 844.6,126.0 811.5,107.3 806.0,80.2 833.0,54.3" fill="none" stroke="#8d9398" stroke-width="0.8" stroke-dasharray="4 2.4"/><polyline points="806.0,80.2 844.6,99.5 869.4,70.3" fill="none" stroke="#8d9398" stroke-width="0.8" stroke-dasharray="4 2.4"/><polyline points="844.6,99.5 844.6,126.0" fill="none" stroke="#8d9398" stroke-width="0.8" stroke-dasharray="4 2.4"/><polygon points="837.0,96.4 842.0,92.6 848.6,95.4 848.4,103.0 844.6,104.6 837.6,101.0" fill="rgba(214,220,228,.85)" /><text font-family="Liberation Sans,sans-serif" font-weight="700" fill="#a0a3a6" text-anchor="middle" font-size="9.6" transform="translate(840.4,78.4) rotate(-41) skewX(-8)">HAUT</text><text font-family="Liberation Sans,sans-serif" font-weight="700" fill="#a0a3a6" text-anchor="middle" font-size="8.6" transform="matrix(.84,.52,0,1,827.6,107.6)">GAUCHE</text><text font-family="Liberation Sans,sans-serif" font-weight="700" fill="#a0a3a6" text-anchor="middle" font-size="8" transform="matrix(.6,-.74,0,1,857.2,100.4)" font-style="italic">AVANT</text><polygon points="564.7,452.2 598.4,417.2 598.4,401.0 595.4,404.5 595.4,409.6 590.3,411.1 587.8,413.4 587.8,419.2 584.5,421.2 579.1,423.8 576.6,426.3 576.6,431.9 572.8,432.9 567.5,433.9 564.7,437.0" fill="#01336c" stroke="#000" stroke-width="0.7" stroke-linejoin="round" /><polygon points="609.6,418.5 612.9,414.6 616.7,413.4 618.5,417.2 618.5,426.8 609.6,434.9" fill="#01336c" stroke="#000" stroke-width="0.7" stroke-linejoin="round" /><polygon points="597.1,432.4 600.2,428.6 603.5,427.6 605.3,431.4 605.3,440.8 597.1,448.9" fill="#01336c" stroke="#000" stroke-width="0.7" stroke-linejoin="round" /><polygon points="584.5,447.1 587.3,443.3 590.0,442.0 591.8,445.6 591.8,454.2 584.5,462.3" fill="#01336c" stroke="#000" stroke-width="0.7" stroke-linejoin="round" /><polygon points="605.3,468.7 640.3,430.6 689.7,456.0 654.0,495.3" fill="#004f9f" stroke="#000" stroke-width="0.8" stroke-linejoin="round" /><ellipse cx="646.6" cy="462.3" rx="24.6" ry="18.6" fill="#004890" stroke="#000" stroke-width=".9"/><ellipse cx="648.6" cy="466.4" rx="22.4" ry="15.6" fill="#004f9f" stroke="#000" stroke-width=".8"/><polygon points="665.6,413.3 694.1,388.2 720.5,381.6 739.1,396.1 738.7,407.4 704.0,446.4 666.3,428.6" fill="rgba(172,174,198,.78)" /><polygon points="672.9,417.6 686.1,414.7 686.8,428.2 682.2,431.9 672.9,426.6" fill="#1f4a80" stroke="#0a2448" stroke-width="0.6" stroke-linejoin="round" /><polygon points="641.2,398.5 675.6,402.5 694.1,396.1 703.3,382.9 706.7,433.2 697.4,428.6" fill="#456a9a" /><polygon points="678.2,408.3 699.4,392.2 699.4,416.3" fill="#3a76bc" /><polygon points="703.3,382.9 706.7,433.2 699.4,429.2 697.0,396.1" fill="#4b6f9f" /><polygon points="703.3,382.9 711.3,394.8 711.3,422.6 706.7,433.2" fill="#3c5d8a" /><polygon points="711.3,395.5 725.8,392.8 752.3,381.3 736.4,404.1 711.3,431.9 706.7,433.2 711.3,422.6" fill="#456a9a" /><polygon points="711.3,395.5 726.6,393.0 712.6,409.6" fill="#3a76bc" /><polyline points="703.3,382.9 706.7,433.2" fill="none" stroke="#2c4668" stroke-width="0.8" /><polygon points="665.0,401.4 674.5,402.1 672.4,404.1 696.7,416.0 696.7,421.5 669.7,407.5 668.4,409.4" fill="#fff" /><polygon points="711.9,411.0 725.8,395.1 724.5,393.2 734.8,390.2 734.0,400.1 732.2,398.5 711.9,418.9" fill="#fff" /><polygon points="699.1,387.2 699.1,373.7 694.7,373.7 699.4,363.1 706.3,373.7 704.0,373.7 704.0,387.2" fill="#b42028" /><polygon points="699.4,363.1 706.3,373.7 704.0,373.7 704.0,387.2 701.5,387.2 701.5,369.7" fill="#8e1820" /><polygon points="696.5,399.5 664.3,380.9 665.6,378.7 648.0,376.3 657.7,387.8 659.7,385.6 695.4,403.6" fill="#3c9444" /><polygon points="696.5,399.5 682.2,391.3 681.1,395.5 695.4,403.6" fill="#7ab284" /><polygon points="711.5,392.2 728.7,371.3 726.5,369.0 739.7,362.4 736.4,376.3 732.4,373.9 715.5,394.8" fill="#2f74c4" /><polygon points="739.1,377.0 752.3,356.5 756.3,353.8 762.2,355.1 766.6,361.1 765.5,365.1 744.4,380.9" fill="#e87272" stroke="#c85858" stroke-width="0.5" stroke-linejoin="round" /><polyline points="752.3,356.5 757.6,359.8 762.2,364.7 765.5,365.1" fill="none" stroke="#fff" stroke-width="0.6" stroke-dasharray="1.2 1.2"/><polygon points="735.1,382.9 739.7,378.3 743.7,380.9 738.4,386.2" fill="#e8e020" /><circle cx="742.4" cy="379.6" r="1.4" fill="#20d040"/><circle cx="736.2" cy="386.2" r="3.7" fill="none" stroke="#fff" stroke-width=".9"/><polyline points="685.5,415.3 686.8,427.2" fill="none" stroke="#f020f0" stroke-width="0.9" /><polyline points="736.4,400.8 735.9,407.4" fill="none" stroke="#f020f0" stroke-width="0.9" /><polygon points="730.5,404.1 735.8,402.1 736.4,406.7 732.4,408.7" fill="#1c3a66" /><text x="706.9" y="358.4" font-family="Liberation Sans,sans-serif" font-size="13" fill="#fff" text-anchor="middle">Z</text><text x="710.8" y="377.9" font-family="Liberation Sans,sans-serif" font-size="13" fill="#fff" text-anchor="middle">Z</text><text x="747.0" y="357.4" font-family="Liberation Sans,sans-serif" font-size="13" fill="#fff" text-anchor="middle">X</text><text x="760.2" y="377.2" font-family="Liberation Sans,sans-serif" font-size="13" fill="#fff" text-anchor="middle">X</text><text x="655.1" y="371.3" font-family="Liberation Sans,sans-serif" font-size="13" fill="#fff" text-anchor="middle">Y</text><text x="648.0" y="394.3" font-family="Liberation Sans,sans-serif" font-size="13" fill="#fff" text-anchor="middle">Y</text><polygon points="283.0,591.0 394.2,649.4 388.4,662.6 383.5,675.8 379.3,685.7 283.7,636.1" fill="#002f60" stroke="#000" stroke-width="0.7" stroke-linejoin="round" /><polygon points="283.0,591.0 278.8,597.0 273.8,610.0 268.8,626.5 262.2,643.0 254.2,656.6 243.4,665.2 227.4,676.6 194.0,700.6 194.0,736.5 283.7,636.1" fill="#013468" stroke="#000" stroke-width="0.7" stroke-linejoin="round" /><polygon points="405.0,648.5 406.6,694.5 282.6,831.4 281.8,779.0 282.0,781.5 289.2,780.9 322.3,759.4 355.3,735.5 365.3,726.4 376.8,713.1 381.8,700.6 386.8,688.0 390.9,675.8 395.9,662.6 400.8,651.0" fill="#013468" stroke="#000" stroke-width="0.7" stroke-linejoin="round" /><polygon points="194.0,738.0 281.8,780.0 282.6,831.4 194.0,784.2" fill="#003163" stroke="#000" stroke-width="0.7" stroke-linejoin="round" /><polygon points="280.1,583.2 275.5,587.0 272.7,591.5 267.7,606.4 262.8,622.9 256.1,639.4 247.9,652.7 237.9,660.1 223.1,670.9 194.0,692.4 194.0,700.6 227.4,676.6 243.4,665.2 254.2,656.6 262.2,643.0 268.8,626.5 273.8,610.0 278.8,597.0 283.0,591.0" fill="#0b55ae" stroke="#000" stroke-width="0.9" stroke-linejoin="round" /><polygon points="400.8,651.0 395.9,662.6 390.9,675.8 386.8,688.0 381.8,700.6 376.8,713.1 365.3,726.4 355.3,735.5 322.3,759.4 289.2,780.9 282.0,781.5 281.8,778.5 287.6,776.8 322.3,755.3 352.0,733.0 362.0,721.4 370.2,708.2 373.5,700.6 379.3,685.7 383.5,675.8 388.4,662.6 394.2,649.4" fill="#0b55ae" stroke="#000" stroke-width="0.9" stroke-linejoin="round" /><polygon points="280.1,583.2 405.0,648.5 400.8,651.0 394.2,649.4 283.0,591.0" fill="#0b55ae" stroke="#000" stroke-width="0.9" stroke-linejoin="round" /><polygon points="194.0,733.6 281.8,777.0 282.0,781.5 194.0,738.4" fill="#0b55ae" stroke="#000" stroke-width="0.9" stroke-linejoin="round" /><polyline points="279.2,589.0 275.8,594.2 270.8,608.2 265.8,624.7 259.1,641.2 251.1,654.7 240.7,662.7 225.2,673.8 194.0,696.5" fill="none" stroke="#00122c" stroke-width="2.2" /><polyline points="397.5,650.2 392.1,662.6 387.2,675.8 383.1,686.9 377.6,700.6 373.5,710.7 363.6,723.9 353.6,734.2 322.3,757.3 288.4,778.8 281.9,780.0" fill="none" stroke="#00122c" stroke-width="2.2" /><polyline points="281.5,587.2 398.0,648.6" fill="none" stroke="#00122c" stroke-width="2.4" /><polyline points="194.0,736.0 281.8,779.2" fill="none" stroke="#00122c" stroke-width="1.8" /><polyline points="275.8,594.2 270.8,608.2 265.8,624.7 259.1,641.2 251.1,654.7" fill="none" stroke="#d8f4c0" stroke-width="1.1" stroke-dasharray="1.2 1.6"/><polyline points="397.5,650.2 392.1,662.6 387.2,675.8 383.1,686.9 377.6,700.6 373.5,710.7 363.6,723.9" fill="none" stroke="#d8f4c0" stroke-width="1.1" stroke-dasharray="1.2 1.6"/><polyline points="283.0,591.0 283.7,636.1" fill="none" stroke="#000" stroke-width="1" /><polyline points="281.8,779.0 282.6,831.4" fill="none" stroke="#000" stroke-width="1.2" /><circle cx="333.2" cy="612.8" r="3.6" fill="none" stroke="#fff" stroke-width=".9"/><circle cx="340.2" cy="616.6" r="3.6" fill="none" stroke="#fff" stroke-width=".9"/><g stroke-linecap="butt"><path d="M220 851.6L204 844.2M220 851.6L230 841" stroke="#c40000" stroke-width="1.1" fill="none"/><path d="M198.1 841.2H205.9L204.2 846.7Z" fill="#c40000"/><path d="M228.2 838.7L235.1 835.1 231.5 843.1Z" fill="#c40000"/><path d="M220 852V839" stroke="#fff" stroke-width="2.6"/><path d="M217 840.2L220 834 223 840.2Z" fill="#fff"/></g><text x="205" y="838.7" font-family="Liberation Sans,sans-serif" font-size="14.2" text-anchor="middle" fill="#c40000" stroke="#c40000" stroke-width=".6">Y</text><text x="227" y="832" font-family="Liberation Sans,sans-serif" font-size="14.2" text-anchor="middle" fill="#fff" stroke="#fff" stroke-width=".3">Z</text><text x="241" y="833" font-family="Liberation Sans,sans-serif" font-size="14.2" text-anchor="middle" fill="#c40000" stroke="#c40000" stroke-width=".6">X</text></svg></div>
<div id="vtool"><div class="abs" style="left:0;top:0;width:53px;height:34px;background:linear-gradient(90deg,#f0f0f0 0,#f0f0f0 40%,#d8d8d8 100%);border-bottom:1px solid #d0d0d0"></div>
<svg class="abs" style="left:38px;top:13px" width="9" height="9" viewBox="0 0 9 9"><path d="M1 1L8 8M8 1L1 8" stroke="#4c4c4c" stroke-width="1.1"/></svg>
<svg class="abs" style="left:15px;top:42px" width="32" height="35" viewBox="0 0 32 35"><rect x=".8" y=".8" width="7.2" height="32.6" fill="#dcdcdc" stroke="#b8b8b8" stroke-width=".7"/><rect x="8" y="7" width="14" height="5.6" fill="#3aa6ae"/><rect x="8" y="26.6" width="20" height="5.8" fill="#3aa6ae"/><rect x="21.4" y="3.2" width="7.6" height="13.6" rx="3" fill="#d8d8d8" stroke="#b0b0b0" stroke-width=".7"/><rect x="23.6" y="17" width="3.4" height="5.6" fill="#e8920a"/></svg>
<svg class="abs" style="left:43px;top:74px" width="5" height="5" viewBox="0 0 5 5"><path d="M5 0V5H0Z" fill="#111"/></svg>
<svg class="abs" style="left:12px;top:82px" width="34" height="34" viewBox="0 0 34 34"><path d="M1 10L9 1.4H32.6L24.4 10Z" fill="#5aa7e4"/><path d="M1 10H24.4V33H1ZM1 10L9 1.4H32.6V24.6L24.4 33M24.4 10L32.6 1.4" fill="none" stroke="#444" stroke-width="1"/><path d="M9 1.4V24.6H32.6M9 24.6L1 33" fill="none" stroke="#666" stroke-width=".8"/></svg>
<svg class="abs" style="left:43px;top:114px" width="5" height="5" viewBox="0 0 5 5"><path d="M5 0V5H0Z" fill="#111"/></svg>
<svg class="abs" style="left:13px;top:122px" width="32" height="35" viewBox="0 0 32 35"><path d="M15.6 1.2L30 9.2V25.6L15.6 33.6 1.4 25.6V9.2Z" fill="#fff" stroke="#777" stroke-width="1.1"/><path d="M1.4 9.2L15.6 17.4 30 9.2M15.6 17.4V33.6" fill="none" stroke="#777" stroke-width="1.1"/><path d="M6.8 12.6H24.6L15.7 20.8Z" fill="#5aa7e4"/></svg>
<svg class="abs" style="left:43px;top:152px" width="5" height="5" viewBox="0 0 5 5"><path d="M5 0V5H0Z" fill="#111"/></svg>
<svg class="abs" style="left:10px;top:162px" width="40" height="36" viewBox="0 0 40 36"><circle cx="11" cy="19.4" r="7.2" fill="none" stroke="#505050" stroke-width="2.3"/><path d="M16.4 24.799999999999997L23.6 32.0" stroke="#505050" stroke-width="3.2" stroke-linecap="round"/><path d="M24.6 4.2A6.4 6.4 0 1 1 22.4 12.6" fill="none" stroke="#1f8ae6" stroke-width="2"/><path d="M19.4 4.6L26.2 1.2 25.8 8.2Z" fill="#1f8ae6"/></svg>
<svg class="abs" style="left:14px;top:209px" width="36" height="34" viewBox="0 0 36 34"><path d="M2 1.6H14.6L24.6 11.6V30H2Z" fill="#f1f1f1" stroke="#666" stroke-width="1"/><path d="M14.6 1.6V11.6H24.6Z" fill="#444"/><circle cx="20" cy="26" r="8.6" fill="#fff"/><path d="M14 25A6 6 0 0 1 24.6 21.6M26 27A6 6 0 0 1 15.4 30.4" fill="none" stroke="#1f8ae6" stroke-width="2"/><path d="M22.4 23.4L28 23.6 26.6 18.2Z" fill="#1f8ae6"/><path d="M17.6 28.6L12 28.4 13.4 33.8Z" fill="#1f8ae6"/></svg>
<svg class="abs" style="left:10px;top:256px" width="40" height="36" viewBox="0 0 40 36"><circle cx="11" cy="19.6" r="7.2" fill="none" stroke="#505050" stroke-width="2.3"/><path d="M16.4 25.0L23.6 32.2" stroke="#505050" stroke-width="3.2" stroke-linecap="round"/><rect x="20.6" y="1.4" width="14.6" height="14.2" fill="#fff" stroke="#555" stroke-width="1"/><path d="M23 4L32.8 13M32.8 4L23 13" stroke="#555" stroke-width="1"/><path d="M22.6 7V3.6H26M29.8 3.6H33.2V7M33.2 10V13.4H29.8M26 13.4H22.6V10" fill="none" stroke="#555" stroke-width="1"/></svg>
<svg class="abs" style="left:10px;top:301px" width="40" height="38" viewBox="0 0 40 38"><circle cx="11" cy="20.4" r="7.2" fill="none" stroke="#505050" stroke-width="2.3"/><path d="M16.4 25.799999999999997L23.6 33.0" stroke="#505050" stroke-width="3.2" stroke-linecap="round"/><rect x="21.6" y="3.2" width="13" height="9" fill="#fff" stroke="#555" stroke-width="1"/></svg>
<svg class="abs" style="left:43px;top:333px" width="5" height="5" viewBox="0 0 5 5"><path d="M5 0V5H0Z" fill="#111"/></svg>
<div class="abs" style="left:9px;top:347px;width:40px;height:40px;background:#cbe3f7;border:1px solid #9ccbf0;border-radius:2px"></div>
<svg class="abs" style="left:12px;top:350px" width="34" height="34" viewBox="0 0 34 34"><path d="M1.4 10H25.4V33H1.4Z" fill="#7fc0f2"/><path d="M25.4 10V33H1.4Z" fill="#62a8e2"/><path d="M1.4 10L9.4 1.2H33V1.2L25.4 10Z" fill="#6ab2ec"/><path d="M25.4 10L33 1.2V24.4L25.4 33Z" fill="#4a90d2"/></svg>
<svg class="abs" style="left:43px;top:383px" width="5" height="5" viewBox="0 0 5 5"><path d="M5 0V5H0Z" fill="#111"/></svg>
<svg class="abs" style="left:12px;top:398px" width="34" height="34" viewBox="0 0 34 34"><path d="M1 10H24.4V33H1ZM1 10L9 1.4H32.6V24.6L24.4 33M24.4 10L32.6 1.4" fill="none" stroke="#444" stroke-width="1"/><path d="M9 1.4V24.6H32.6M9 24.6L1 33" fill="none" stroke="#555" stroke-width=".9"/></svg>
<div class="abs" style="left:9px;top:441px;width:40px;height:39px;background:#cbe3f7;border:1px solid #9ccbf0;border-radius:2px"></div>
<svg class="abs" style="left:12px;top:444px" width="34" height="34" viewBox="0 0 34 34"><path d="M1 10L9 1.4H32.6V24.6L24.4 33H1Z" fill="#86c2f2"/><path d="M24.4 10L32.6 1.4V24.6L24.4 33Z" fill="#6aaee8"/><path d="M1 10H24.4V33H1ZM1 10L9 1.4H32.6V24.6L24.4 33M24.4 10L32.6 1.4" fill="none" stroke="#3a7ab8" stroke-width="1"/><path d="M9 1.4V24.6H32.6M9 24.6L1 33" fill="none" stroke="#4a88c4" stroke-width=".9"/></svg>
<svg class="abs" style="left:12px;top:493px" width="34" height="30" viewBox="0 0 34 30"><path d="M12 11.6H2.4V27.4H31.6V11.6H24" fill="none" stroke="#444" stroke-width="1"/><path d="M10.4 1.6L26 14.4 18.8 14.8 22.6 23 19.6 24.4 16 16.2 11 21Z" fill="#1a84e0"/></svg>
<svg class="abs" style="left:43px;top:521px" width="5" height="5" viewBox="0 0 5 5"><path d="M5 0V5H0Z" fill="#111"/></svg>
<svg class="abs" style="left:12px;top:532px" width="38" height="34" viewBox="0 0 38 34"><path d="M2.4 1.8L20.6 18.6 12.6 18.6 17 28.6 13.4 30.2 9 20.4 3 25.4Z" fill="#1a84e0"/><path d="M24.6 5.4A5.6 5.6 0 1 1 21.6 12.6" fill="none" stroke="#777" stroke-width="1.3"/><path d="M21.6 2.6L26.4 5.4 21.6 8Z" fill="#777" transform="rotate(-20 24 5.4)"/></svg></div>
<div id="status"><svg class="abs" style="left:1px;top:5px" width="28" height="24" viewBox="0 0 28 24"><path d="M4.6 22V4" stroke="#2a8ae0" stroke-width="1.2"/><path d="M2.8 6L4.6 2 6.4 6Z" fill="#2a8ae0"/><path d="M7 20.4L22 5.6" stroke="#22a744" stroke-width="1.2"/><path d="M19.6 5.2L23.6 4 22.4 8Z" fill="#22a744"/><rect x="23.4" y=".8" width="3" height="3" fill="#1f8ae6"/><path d="M7 23.4H22" stroke="#f03030" stroke-width="1.4"/><path d="M20 24L25.6 18.6V24Z" fill="#000"/><rect x="3.4" y="21.6" width="2.6" height="2.4" fill="#ccc" stroke="#999" stroke-width=".5"/></svg>
<div class="abs" style="left:31px;top:7px;width:88px;height:21px;background:#fbfbfb;border-radius:3px"></div>
<div class="t" style="left:35px;top:11.6px;font-size:11.6px;letter-spacing:0">TopCentre</div>
<svg class="abs" style="left:106px;top:14px" width="10" height="7" viewBox="0 0 10 7"><path d="M1 1.2L5 5.2 9 1.2" fill="none" stroke="#444" stroke-width="1"/></svg>
<div class="abs" style="left:177px;top:6px;width:24px;height:24px;background:#cce4f7;border:1px solid #99c9ef;border-radius:2.5px"></div>
<svg class="abs" style="left:120px;top:0" width="110" height="29" viewBox="0 0 110 29"><path d="M6.97 12.98L12.03 8.87 14.25 10.13V15.5L9.5 19 6.97 18.37Z" fill="#6ab0e8"/><path d="M15.5 17.1V10.2" stroke="#1f8ae6" stroke-width="1.7"/><path d="M13.5 10.5L15.5 7.8 17.5 10.5Z" fill="#1f8ae6"/><path d="M15.5 17.1L8 21.9" stroke="#1f8ae6" stroke-width="2"/><path d="M6.5 23L10.2 22.4 8.4 19.9Z" fill="#1f8ae6"/><path d="M15.5 17.1L22.8 21.9" stroke="#777" stroke-width="1.3"/><path d="M24.2 22.9L20.8 22.4 22.2 20.2Z" fill="#777"/><path d="M20.2 10.5L24.9 15.8M24.9 10.5L20.2 15.8" stroke="#1f8ae6" stroke-width="1.3"/><path d="M43.7 10.1L45.6 8.9 50 12.7V18.5L47.5 19 43.7 15.5Z" fill="#6ab0e8"/><path d="M41.5 17.1V10.2" stroke="#1f8ae6" stroke-width="1.7"/><path d="M39.5 10.5L41.5 7.8 43.5 10.5Z" fill="#1f8ae6"/><path d="M41.5 17.1L49 21.9" stroke="#1f8ae6" stroke-width="2"/><path d="M50.5 23L46.8 22.4 48.6 19.9Z" fill="#1f8ae6"/><path d="M41.5 17.1L34.2 21.9" stroke="#777" stroke-width="1.3"/><path d="M32.8 22.9L36.2 22.4 34.8 20.2Z" fill="#777"/><path d="M39 21.9L41.4 25.2 43.8 21.9M41.4 25.2V28.6" fill="none" stroke="#1f8ae6" stroke-width="1.3"/><path d="M59.2 10.6H63.6L59.2 15.4H63.8" fill="none" stroke="#1f8ae6" stroke-width="1.4"/><path d="M68.4 16.8V10.2" stroke="#666" stroke-width="1.5"/><path d="M66.5 10.5L68.4 7.8 70.3 10.5Z" fill="#666"/><path d="M68.4 16.8L61 22M68.4 16.8L75.8 22" stroke="#1f8ae6" stroke-width="2"/><path d="M59.8 22.9L63.2 22.4 61.6 20.2ZM77 22.9L73.6 22.4 75.2 20.2Z" fill="#1f8ae6"/><path d="M68.4 20.9L74.1 24.4 68.4 27.9 63 24.4Z" fill="#6ab0e8"/><path d="M94.4 10.8C93 7.6 87.4 7.8 86.8 11.2 86.2 14.8 89.8 15.6 91.8 18" fill="none" stroke="#000" stroke-width="3"/><path d="M94 10.6C92.6 8.4 88 8.6 87.6 11.4 87.2 14.2 90 15 91.6 17" fill="none" stroke="#c8c8c8" stroke-width="1.3"/><rect x="90.8" y="18" width="10.4" height="9.4" rx="1" fill="#8c8c8c" stroke="#000" stroke-width="1.5"/><path d="M92 20.2H100M92 22.4H100M92 24.6H100" stroke="#dcdcdc" stroke-width=".9"/><rect x="91.4" y="18.6" width="3" height="8.2" fill="#fff" opacity=".55"/></svg>
<svg class="abs" style="left:243px;top:8px" width="20" height="20" viewBox="0 0 20 20"><path d="M1.0 0V20M0 1.0H20" stroke="#c4c4c4" stroke-width="1.2"/><path d="M4.7 0V20M0 4.7H20" stroke="#c4c4c4" stroke-width="1.2"/><path d="M8.4 0V20M0 8.4H20" stroke="#c4c4c4" stroke-width="1.2"/><path d="M12.1 0V20M0 12.1H20" stroke="#c4c4c4" stroke-width="1.2"/><path d="M15.8 0V20M0 15.8H20" stroke="#c4c4c4" stroke-width="1.2"/><path d="M19.5 0V20M0 19.5H20" stroke="#c4c4c4" stroke-width="1.2"/></svg>
<div class="sf" style="left:269px;width:51px"></div>
<div class="sf" style="left:335px;width:55px"><span style="position:absolute;left:5px;top:0">-271.34</span></div>
<div class="sf" style="left:395px;width:55px"><span style="position:absolute;left:6px;top:0">-1181</span></div>
<div class="sf" style="left:455px;width:55px"><span style="position:absolute;left:5px;top:0">0</span></div>
<svg class="abs" style="left:516px;top:8px" width="20" height="20" viewBox="0 0 20 20"><rect x=".6" y=".6" width="18.6" height="18.8" fill="#f6f6f6" stroke="#c8c8c8" stroke-width="1.1"/><path d="M8 4.4H17M8 10H17M8 15.6H17" stroke="#dedede" stroke-width="1.4"/><path d="M2.6 2.6L6 6.4M6 2.6L2.6 6.4M2.6 8L4.3 10 6 8M4.3 10V12.2M2.6 13.8H6L2.6 17.6H6" fill="none" stroke="#c4c4c4" stroke-width=".9"/></svg>
<svg class="abs" style="left:542px;top:7px" width="20" height="22" viewBox="0 0 20 22"><circle cx="5" cy="16.6" r="2.6" fill="none" stroke="#c0c0c0" stroke-width="1"/><path d="M5 12V21M.6 16.6H9.4" stroke="#c0c0c0" stroke-width=".9"/><path d="M7.4 14.2L13.4 8.2" stroke="#c0c0c0" stroke-width="1.2"/><path d="M11 7.6L14.6 7 14 10.6Z" fill="#c0c0c0"/><circle cx="16.6" cy="3.6" r="2.4" fill="#cfcfcf"/></svg>
<div class="sf" style="left:569px;width:88px"></div>
<svg class="abs" style="left:672px;top:8px" width="22" height="20" viewBox="0 0 22 20"><rect x=".8" y=".8" width="13" height="16.6" fill="#d8d8d8" stroke="#6e6e6e" stroke-width="1"/><rect x="8.6" y="2.6" width="3.2" height="3" fill="none" stroke="#555" stroke-width=".9"/><rect x="2.6" y="7.4" width="1.6" height="1.6" fill="#7a7a7a"/><rect x="2.6" y="10.4" width="1.6" height="1.6" fill="#7a7a7a"/><rect x="2.6" y="13.4" width="1.6" height="1.6" fill="#7a7a7a"/><rect x="5.6" y="7.4" width="1.6" height="1.6" fill="#7a7a7a"/><rect x="5.6" y="10.4" width="1.6" height="1.6" fill="#7a7a7a"/><rect x="5.6" y="13.4" width="1.6" height="1.6" fill="#7a7a7a"/><rect x="8.6" y="7.4" width="1.6" height="1.6" fill="#7a7a7a"/><rect x="8.6" y="10.4" width="1.6" height="1.6" fill="#7a7a7a"/><rect x="8.6" y="13.4" width="1.6" height="1.6" fill="#7a7a7a"/><rect x="11.6" y="7.4" width="1.6" height="1.6" fill="#7a7a7a"/><rect x="11.6" y="10.4" width="1.6" height="1.6" fill="#7a7a7a"/><rect x="11.6" y="13.4" width="1.6" height="1.6" fill="#7a7a7a"/><rect x="12.8" y="10.4" width="2.8" height="8.6" fill="#1f8ae6"/><rect x="17.2" y="10.4" width="2.8" height="8.6" fill="#1f8ae6"/></svg>
<svg class="abs" style="left:708px;top:8px" width="24" height="22" viewBox="0 0 24 22"><path d="M1.4 1.4V9.6M11.6 1.4V9.6M22 1.4V9.6" stroke="#2a8ae0" stroke-width="1.2"/><path d="M3.4 4.2V8" stroke="#2a8ae0" stroke-width=".9"/><path d="M5.4 4.2V8" stroke="#2a8ae0" stroke-width=".9"/><path d="M7.5 4.2V8" stroke="#2a8ae0" stroke-width=".9"/><path d="M9.5 4.2V8" stroke="#2a8ae0" stroke-width=".9"/><path d="M13.7 4.2V8" stroke="#2a8ae0" stroke-width=".9"/><path d="M15.7 4.2V8" stroke="#2a8ae0" stroke-width=".9"/><path d="M17.7 4.2V8" stroke="#2a8ae0" stroke-width=".9"/><path d="M19.8 4.2V8" stroke="#2a8ae0" stroke-width=".9"/><text x="3.2" y="19.4" font-family="Liberation Sans,sans-serif" font-size="9.4" font-weight="700" fill="#2a8ae0" text-anchor="middle">0</text><text x="11.8" y="19.4" font-family="Liberation Sans,sans-serif" font-size="9.4" font-weight="700" fill="#2a8ae0" text-anchor="middle">1</text><text x="20.6" y="19.4" font-family="Liberation Sans,sans-serif" font-size="9.4" font-weight="700" fill="#2a8ae0" text-anchor="middle">2</text></svg>
<div class="sf" style="left:735px;width:55px"><span style="position:absolute;left:5px;top:0">mm</span></div>
<svg class="abs" style="left:794px;top:5px" width="24" height="24" viewBox="0 0 24 24"><circle cx="12.4" cy="12.6" r="8" fill="none" stroke="#2a7fd0" stroke-width="1.3"/><path d="M12.4 1V24M1 12.6H23.6" stroke="#2a7fd0" stroke-width="1.1"/></svg>
<div class="sf" style="left:821px;width:55px"><span style="position:absolute;left:5px;top:0">0.02</span></div>
<svg class="abs" style="left:881px;top:6px" width="21" height="23" viewBox="0 0 21 23"><path d="M9.6 2.6H18.4V10.4L16.6 12.6V15.4H11.4V12.6L9.6 10.4Z" fill="#f4f8fc" stroke="#2a7fd0" stroke-width="1.2"/><path d="M1.2 13.3H8.4" stroke="#2a7fd0" stroke-width="1.4" stroke-dasharray="1 1"/><path d="M11.4 17.4H16.6M11.8 19.4H16.2M12.4 21.4H15.6" stroke="#2a7fd0" stroke-width=".9"/></svg>
<div class="sf" style="left:907px;width:33px"><span style="position:absolute;left:5px;top:0">0.0</span></div>
<svg class="abs" style="left:943px;top:21px" width="8" height="8" viewBox="0 0 8 8"><rect x="5" y="5" width="2" height="2" fill="#b8b8b8"/><rect x="5" y="1.6" width="2" height="2" fill="#b8b8b8"/><rect x="1.6" y="5" width="2" height="2" fill="#b8b8b8"/></svg></div>
<div id="winedge"></div>

<!-- ================= RIGHT: Autodesk viewer ================= -->
<div id="viewer">
  <div id="vhead"><div class="abs" style="left:0;top:-1px;width:937px;height:1px;background:#dadada"></div>
<svg class="abs" style="left:14px;top:18px" width="18" height="13" viewBox="0 0 18 13"><path d="M0 13V8L13.4 0H18V13H11V10.6L15 7.6H10.6Z" fill="#000"/></svg>
<svg class="abs" style="left:46px;top:20px" width="8" height="12" viewBox="0 0 8 12"><path d="M1.2 .8L6.6 5.8 1.2 10.8" fill="none" stroke="#333" stroke-width="1.1"/></svg>
<div class="t" style="left:63px;top:18.5px;font-size:13px;color:#3a3a3a;letter-spacing:.03px">en roulant.collaboration</div>
<div class="abs" style="left:906px;top:0;width:1px;height:50px;background:#d5dce4"></div>
<svg class="abs" style="left:925px;top:17px" width="12" height="15" viewBox="0 0 12 15"><path d="M0 1H12M0 7.6H12M0 14H12" stroke="#111" stroke-width="1.3"/></svg></div>
  <div id="vbar"><svg class="abs" style="left:25px;top:16px" width="14" height="12" viewBox="0 0 14 12"><path d="M0 1Q0 0 1 0H13Q14 0 14 1V11Q14 12 13 12H1Q0 12 0 11ZM1.8 1.8V7H12.2V1.8Z" fill="#45525c" fill-rule="evenodd"/></svg>
<div class="t vb" style="left:47px;top:15.700000000000003px">Vues</div>
<svg class="abs" style="left:103px;top:15px" width="13" height="14" viewBox="0 0 13 14"><rect x="3.8" y="0" width="5" height="4.4" rx=".8" fill="#45525c"/><rect x="0" y="9.4" width="5" height="4.4" rx=".8" fill="#45525c"/><rect x="7.4" y="9.4" width="5" height="4.4" rx=".8" fill="#45525c"/><path d="M6.3 4V7M2.5 9.6V7H10V9.6" fill="none" stroke="#45525c" stroke-width="1.3"/></svg>
<div class="t vb" style="left:124.5px;top:15.700000000000003px">Navigateur de modèle</div>
<svg class="abs" style="left:270px;top:15px" width="12" height="14" viewBox="0 0 12 14"><rect x=".9" y=".9" width="10.2" height="12.2" rx=".8" fill="#fff" stroke="#45525c" stroke-width="1.8"/><path d="M3.2 4.2H8.8M3.2 7H8.8M3.2 9.8H6.6" stroke="#45525c" stroke-width="1.4"/></svg>
<div class="t vb" style="left:291px;top:15.700000000000003px">Propriétés</div>
<svg class="abs" style="left:375px;top:15px" width="14.4" height="14" viewBox="0 0 14.4 14"><rect x="5.6" y="0" width="3.2" height="3.6" rx=".5" fill="#45525c" transform="rotate(0 7.2 7)"/><rect x="5.6" y="0" width="3.2" height="3.6" rx=".5" fill="#45525c" transform="rotate(45 7.2 7)"/><rect x="5.6" y="0" width="3.2" height="3.6" rx=".5" fill="#45525c" transform="rotate(90 7.2 7)"/><rect x="5.6" y="0" width="3.2" height="3.6" rx=".5" fill="#45525c" transform="rotate(135 7.2 7)"/><rect x="5.6" y="0" width="3.2" height="3.6" rx=".5" fill="#45525c" transform="rotate(180 7.2 7)"/><rect x="5.6" y="0" width="3.2" height="3.6" rx=".5" fill="#45525c" transform="rotate(225 7.2 7)"/><rect x="5.6" y="0" width="3.2" height="3.6" rx=".5" fill="#45525c" transform="rotate(270 7.2 7)"/><rect x="5.6" y="0" width="3.2" height="3.6" rx=".5" fill="#45525c" transform="rotate(315 7.2 7)"/><circle cx="7.2" cy="7" r="5.1" fill="#45525c"/><circle cx="7.2" cy="7" r="2.5" fill="#fff"/></svg>
<div class="t vb" style="left:397.5px;top:15.700000000000003px">Paramètres</div>
<svg class="abs" style="left:782px;top:15px" width="14" height="14" viewBox="0 0 14 14"><path d="M1.6 0H12.4Q14 0 14 1.6V9.2Q14 10.8 12.4 10.8H11.6V14L8.2 10.8H1.6Q0 10.8 0 9.2V1.6Q0 0 1.6 0Z" fill="#45525c"/><path d="M2.8 3.2H11M2.8 5.5H11M2.8 7.8H8" stroke="#fff" stroke-width=".9"/></svg>
<svg class="abs" style="left:827px;top:15px" width="14.2" height="13.8" viewBox="0 0 14.2 13.8"><rect x="3" y="0" width="8" height="2.6" fill="#45525c"/><path d="M2 4H12.2Q14.2 4 14.2 6V9.6Q14.2 11.6 12.4 11.6H11.6V8.4H2.8V11.6H1.8Q0 11.6 0 9.6V6Q0 4 2 4Z" fill="#45525c"/><rect x="4.2" y="9.4" width="5.8" height="4.4" rx=".6" fill="#45525c"/></svg>
<svg class="abs" style="left:871px;top:15px" width="16" height="13.8" viewBox="0 0 16 13.8"><path d="M5.6 0H10.4L11.8 2.6H14.2Q16 2.6 16 4.4V12Q16 13.8 14.2 13.8H1.8Q0 13.8 0 12V4.4Q0 2.6 1.8 2.6H4.2Z" fill="#45525c"/><circle cx="8" cy="8" r="3.7" fill="none" stroke="#fff" stroke-width="1"/></svg>
<svg class="abs" style="left:916.8px;top:15px" width="14.4" height="14" viewBox="0 0 14.4 14"><g fill="none" stroke="#45525c" stroke-width="2.3" stroke-linecap="round"><path d="M6.2 8A3 3 0 0 0 10.4 8.2L12.4 6.2A3 3 0 0 0 8.2 2L7.4 2.8"/><path d="M8.2 6A3 3 0 0 0 4 5.8L2 7.8A3 3 0 0 0 6.2 12L7 11.2"/></g></svg></div>
  <div id="canvas"><svg class="abs" style="left:0;top:0" width="937" height="695" viewBox="958 98 937 695"><defs><filter id="blR" x="-50%" y="-80%" width="200%" height="260%"><feGaussianBlur stdDeviation="16"/></filter><filter id="blR2" x="-50%" y="-80%" width="200%" height="260%"><feGaussianBlur stdDeviation="9"/></filter></defs><ellipse cx="1196" cy="492" rx="160" ry="52" fill="rgba(70,70,70,.31)" filter="url(#blR)" transform="rotate(-4 1196 492)"/><ellipse cx="1225" cy="440" rx="66" ry="28" fill="rgba(60,60,60,.22)" filter="url(#blR2)"/><polygon points="1224.4,347.3 1306.7,398.9 1302.4,400.4 1298.1,405.5 1292.4,416.1 1286.7,427.6 1282.4,435.3 1224.4,399.5" fill="#55360f" /><polygon points="1224.4,347.3 1220.7,349.3 1216.7,355.9 1211.5,368.8 1205.8,381.7 1197.8,392.3 1189.7,398.9 1180.6,402.4 1136.1,405.2 1095.1,407.0 1088.8,408.4 1139.0,439.6 1224.4,399.5" fill="#593910" /><polygon points="1079.6,410.4 1169.1,464.0 1169.1,518.5 1079.6,462.9" fill="#523312" stroke="#c98218" stroke-width="0.7" stroke-linejoin="round" /><polygon points="1314.5,396.9 1314.5,451.4 1169.1,518.5 1169.1,463.4 1180.6,466.9 1249.4,462.3 1263.7,456.3 1275.2,447.7 1283.2,438.2 1291.0,426.2 1296.7,414.7 1302.4,403.8 1308.2,398.9 1314.5,396.9" fill="#58370f" stroke="#c98218" stroke-width="0.7" stroke-linejoin="round" /><polygon points="1224.4,340.7 1219.3,343.0 1214.4,350.2 1209.2,364.5 1203.5,378.0 1195.5,389.5 1187.7,396.1 1179.1,399.2 1134.7,401.8 1088.8,403.8 1079.6,409.0 1088.8,408.4 1095.1,407.0 1136.1,405.2 1180.6,402.4 1189.7,398.9 1197.8,392.3 1205.8,381.7 1211.5,368.8 1216.7,355.9 1220.7,349.3 1224.4,347.3" fill="#b9740f" /><polygon points="1314.5,396.9 1308.2,398.9 1302.4,403.8 1296.7,414.7 1291.0,426.2 1283.2,438.2 1275.2,447.7 1263.7,456.3 1249.4,462.3 1180.6,466.9 1169.1,463.4 1176.3,460.6 1182.0,464.0 1248.8,459.4 1261.4,454.3 1271.8,446.2 1279.5,437.6 1286.7,427.6 1292.4,416.1 1298.1,405.5 1302.4,400.4 1306.7,398.9" fill="#b9740f" /><polygon points="1224.4,340.7 1314.5,396.9 1306.7,398.9 1224.4,347.3" fill="#b9740f" /><polygon points="1079.6,409.0 1088.8,407.8 1176.3,460.6 1169.1,464.0" fill="#b9740f" /><polyline points="1224.4,344.0 1220.0,346.2 1215.6,353.0 1210.4,366.7 1204.7,379.9 1196.6,390.9 1188.7,397.5 1179.9,400.8 1135.4,403.5 1092.0,405.4 1084.2,408.7" fill="none" stroke="#7a4a0c" stroke-width="0.7" /><polyline points="1310.6,397.9 1305.3,399.6 1300.3,404.7 1294.6,415.4 1288.8,426.9 1281.4,437.9 1273.5,447.0 1262.6,455.3 1249.1,460.9 1181.3,465.4 1172.7,462.0" fill="none" stroke="#7a4a0c" stroke-width="0.7" /><polyline points="1224.4,343.9 1310.2,397.8" fill="none" stroke="#7a4a0c" stroke-width="0.7" /><polyline points="1084.2,408.4 1172.5,462.3" fill="none" stroke="#7a4a0c" stroke-width="0.7" /><polyline points="1224.4,347.3 1224.4,399.5" fill="none" stroke="#c98218" stroke-width="0.7" /><polyline points="1169.1,464.0 1169.1,518.5" fill="none" stroke="#c98218" stroke-width="1.2" /><polyline points="1311.9,398.1 1311.9,452.0" fill="none" stroke="#c98218" stroke-width="0.6" /><polyline points="1180.6,465.7 1249.4,461.4 1262.3,455.7" fill="none" stroke="#1a7fe0" stroke-width="1.1" /><polyline points="1292.4,423.3 1302.4,404.7" fill="none" stroke="#1a7fe0" stroke-width="0.9" stroke-dasharray="2 3"/><circle cx="1262.3" cy="365.9" r=".8" fill="#ff20c0"/><circle cx="1267.2" cy="368.8" r=".8" fill="#ff20c0"/><ellipse cx="1652" cy="349" rx="88" ry="29" fill="rgba(60,60,60,.44)" filter="url(#blR)" transform="rotate(-8 1652 349)"/><ellipse cx="1572" cy="352" rx="50" ry="20" fill="rgba(60,60,60,.34)" filter="url(#blR)"/><polygon points="1524.3,318.3 1530.3,315.7 1531.0,320.2 1536.4,317.6 1537.0,312.2 1542.7,310.0 1543.3,314.1 1549.7,311.0 1550.3,305.9 1556.0,304.0 1556.6,307.8 1560.7,305.6 1561.1,301.5 1564.7,300.2 1564.7,323.3 1524.3,337.6" fill="#0d4a8a" stroke="#2a8af0" stroke-width="0.8" stroke-linejoin="round" /><polygon points="1538.6,329.7 1540.5,326.5 1546.5,324.9 1548.9,328.1 1548.9,341.1 1538.6,345.8" fill="#3d0a45" stroke="#e020c0" stroke-width="0.7" stroke-linejoin="round" /><polygon points="1553.6,322.1 1555.5,318.9 1561.5,317.3 1563.9,320.5 1563.9,333.5 1553.6,338.2" fill="#3d0a45" stroke="#e020c0" stroke-width="0.7" stroke-linejoin="round" /><polygon points="1568.7,314.6 1570.6,311.5 1576.6,309.9 1578.9,313.0 1578.9,326.0 1568.7,330.8" fill="#3d0a45" stroke="#e020c0" stroke-width="0.7" stroke-linejoin="round" /><polygon points="1554.1,349.4 1594.0,330.4 1630.1,352.6 1589.2,371.6" fill="#1e7d22" stroke="#1a8a24" stroke-width="0.6" stroke-linejoin="round" /><ellipse cx="1591.6" cy="351.0" rx="21.4" ry="11.6" fill="#1b7420" stroke="#12a028" stroke-width=".8"/><ellipse cx="1592.7" cy="353.4" rx="19.6" ry="9.4" fill="#1e7d22" stroke="#12a028" stroke-width=".6"/><polygon points="1621.4,320.2 1663.6,300.4 1689.0,307.5 1689.8,333.6 1647.8,353.4 1621.4,336.0" fill="rgba(168,172,198,.78)" /><polygon points="1621.4,320.2 1663.6,300.4 1689.0,307.5 1647.8,326.5" fill="rgba(200,204,224,.55)" /><polygon points="1628.0,329.7 1632.0,324.9 1644.6,320.9 1662.1,313.0 1674.7,315.4 1684.2,321.7 1685.8,329.7 1681.1,332.0 1676.3,326.5 1657.3,329.7 1638.3,336.0 1628.8,337.6" fill="#7d97ad" stroke="#dfe8f0" stroke-width="0.6" stroke-linejoin="round" /><polygon points="1645.0,315.7 1635.9,309.4 1634.8,311.0 1631.2,305.3 1637.7,306.2 1636.7,307.8 1645.9,314.1" fill="#2c7a3c" /><polygon points="1658.6,317.3 1679.8,309.4 1679.2,307.5 1684.9,307.8 1681.1,311.9 1680.4,310.3 1659.2,318.6" fill="#2c5c9c" /><polygon points="1654.5,303.1 1654.5,294.0 1652.9,294.0 1655.2,287.9 1657.8,294.0 1656.2,294.0 1656.2,303.1" fill="#a82a2a" /><polygon points="1645.0,306.2 1647.5,302.7 1655.1,302.4 1658.1,305.9 1657.1,313.0 1654.3,320.5 1654.0,330.6 1649.1,330.6 1648.1,320.5 1645.6,313.0" fill="#b85a5a" stroke="#a04848" stroke-width="0.5" stroke-linejoin="round" /><polygon points="1652.6,302.7 1655.1,302.4 1658.1,305.9 1657.1,313.0 1654.3,320.5 1654.0,330.6 1651.9,330.6 1652.2,320.2 1653.5,313.0" fill="#924444" /><polygon points="1650.2,332.5 1652.9,332.5 1652.9,338.5 1650.2,338.5" fill="#d8c020" /><polygon points="1655.7,318.6 1658.1,318.3 1658.1,322.4 1655.7,322.7" fill="#e88a10" /><polyline points="1636.7,334.1 1651.0,330.0 1674.7,329.0 1680.7,325.9 1684.2,329.7 1687.4,329.0" fill="none" stroke="#20e040" stroke-width="0.9" /><polyline points="1636.4,320.9 1636.4,333.8" fill="none" stroke="#ff20e0" stroke-width="0.8" /><polyline points="1688.7,308.3 1688.7,330.0" fill="none" stroke="#ff20e0" stroke-width="0.8" /><polygon points="1796.2,201.4 1829.2,221.2 1867.6,204.0 1867.6,208.8 1829.2,226.0 1796.2,206.2" fill="#cecece" /><defs><linearGradient id="cfL" x1="0" y1="0" x2="0" y2="1"><stop offset="0" stop-color="#f3f3f3"/><stop offset="1" stop-color="#dedede"/></linearGradient></defs><polygon points="1833.9,140.1 1867.6,160.4 1829.2,178.2 1796.2,157.7" fill="#f2f2f2" /><polygon points="1796.2,157.7 1829.2,178.2 1829.2,221.2 1796.2,201.4" fill="url(#cfL)" /><polygon points="1829.2,178.2 1867.6,160.4 1867.6,204.0 1829.2,221.2" fill="url(#cfL)" /><polyline points="1796.2,157.7 1833.9,140.1 1867.6,160.4" fill="none" stroke="#b4b8bc" stroke-width="0.8" stroke-dasharray="5 2.5"/><polyline points="1796.2,157.7 1829.2,178.2 1867.6,160.4" fill="none" stroke="#b4b8bc" stroke-width="0.8" stroke-dasharray="5 2.5"/><polyline points="1829.2,178.2 1829.2,221.2" fill="none" stroke="#b4b8bc" stroke-width="0.8" stroke-dasharray="5 2.5"/><text font-family="Liberation Sans,sans-serif" font-weight="700" fill="#b6babe" text-anchor="middle" font-size="9.4" transform="matrix(.91,-.42,1,.54,1834.9,161.4)">HAUT</text><text font-family="Liberation Sans,sans-serif" font-weight="700" fill="#b6babe" text-anchor="middle" font-size="12" transform="matrix(.8,.5,0,1,1812.8,194.6)" textLength="38" lengthAdjust="spacingAndGlyphs">GAUCHE</text><text font-family="Liberation Sans,sans-serif" font-weight="700" fill="#b6babe" text-anchor="middle" font-size="12" font-style="italic" transform="matrix(.8,-.46,0,1,1849,196.4)" textLength="35" lengthAdjust="spacingAndGlyphs">AVANT</text><path d="M1728.6 127.6L1738 118.6 1747.4 127.6M1731.2 126V134.6H1735.6V128.6H1740.4V134.6H1744.8V126" fill="none" stroke="#9aa0a6" stroke-width="1.1" stroke-linejoin="round"/><circle cx="1391.4" cy="369.6" r="4.4" fill="#9cb4a2"/></svg></div>
  <div id="mbar"><div class="abs" style="left:0;top:-12px;width:937px;height:12px;background:linear-gradient(rgba(0,0,0,0),rgba(0,0,0,.06))"></div>
<div class="abs" style="left:0;top:44px;width:937px;height:16px;background:linear-gradient(#fff,#f1f1f1)"></div>
<svg class="abs" style="left:248.5999999999999px;top:17px" width="19" height="8" viewBox="0 0 19 8"><path d="M.8 .4V7.6M18 .4V7.6M3.4 4H15.4" fill="none" stroke="#38424a" stroke-width="1.2"/><path d="M3 4L6 2V6ZM15.8 4L12.8 2V6Z" fill="#38424a"/></svg>
<div class="t mb" style="left:218.20000000000005px;width:80px;top:35px;color:#5a646c;-webkit-text-stroke:.3px #5a646c">Distance</div>
<svg class="abs" style="left:327px;top:13.399999999999977px" width="16" height="15" viewBox="0 0 16 15"><path d="M1.4 .4V13.6H15" fill="none" stroke="#38424a" stroke-width="1.3"/><path d="M2 4.4C7.6 4.8 11 8 11.8 12" fill="none" stroke="#38424a" stroke-width="1.1"/><path d="M9.4 10.2L12 13.2 13.4 9.6Z" fill="#38424a"/></svg>
<div class="t mb" style="left:295px;width:80px;top:35px;color:#5a646c;-webkit-text-stroke:.3px #5a646c">Angle</div>
<svg class="abs" style="left:404.5999999999999px;top:13px" width="15" height="16.4" viewBox="0 0 15 16.4"><circle cx="7.4" cy="3.4" r="2" fill="none" stroke="#38424a" stroke-width="1.2"/><path d="M7.4 .2V1.6M6.4 5L1.6 16M8.4 5L13.2 16M2 11.2H12.8" fill="none" stroke="#38424a" stroke-width="1.3"/></svg>
<div class="t mb" style="left:372px;width:80px;top:35px;color:#5a646c;-webkit-text-stroke:.3px #5a646c">Calibrer</div>
<svg class="abs" style="left:477.5999999999999px;top:14.600000000000023px" width="17" height="17" viewBox="0 0 17 17"><path d="M.6 3.6H16M5.4 3.4V1H11.2V3.4M2.6 3.8V15.6H14V3.8" fill="none" stroke="#38424a" stroke-width="1.5"/><path d="M6.4 7V12.6M10.2 7V12.6" stroke="#38424a" stroke-width="1.5"/></svg>
<div class="t mb" style="left:445.29999999999995px;width:80px;top:35px;color:#38424a;-webkit-text-stroke:.3px #38424a">Supprimer</div>
<svg class="abs" style="left:549px;top:14.799999999999955px" width="16" height="16" viewBox="0 0 16 16"><path d="M15.45 6.52L15.60 8.00L13.69 9.13L13.36 10.22L14.32 12.22L13.37 13.37L11.22 12.82L10.22 13.36L9.48 15.45L8.00 15.60L6.87 13.69L5.78 13.36L3.78 14.32L2.63 13.37L3.18 11.22L2.64 10.22L0.55 9.48L0.40 8.00L2.31 6.87L2.64 5.78L1.68 3.78L2.63 2.63L4.78 3.18L5.78 2.64L6.52 0.55L8.00 0.40L9.13 2.31L10.22 2.64L12.22 1.68L13.37 2.63L12.82 4.78L13.36 5.78Z" fill="none" stroke="#38424a" stroke-width="1.3" stroke-linejoin="round"/><circle cx="8" cy="8" r="2.6" fill="none" stroke="#38424a" stroke-width="1.3"/></svg>
<div class="t mb" style="left:516.5999999999999px;width:80px;top:35px;color:#38424a;-webkit-text-stroke:.3px #38424a">Paramètres</div>
<div class="abs" style="left:602px;top:0;width:1px;height:60px;background:#dcdcdc"></div>
<div class="abs" style="left:633px;top:14px;width:103px;height:32px;border:1px solid #8c8c8c;border-radius:2px;background:#fff;text-align:center;line-height:28.4px;font-size:10.5px;color:#aeb2b6;-webkit-text-stroke:.25px #aeb2b6"><span style="display:inline-block;transform:scaleX(.84);letter-spacing:.1px">EFFACER</span></div>
<div class="abs" style="left:923px;top:13px;width:20px;height:34px;background:#0c141c;border-radius:4px 0 0 4px"></div>
<div class="abs" style="left:932.5999999999999px;top:26.399999999999977px;width:7px;height:6px;border-radius:3px;background:#fff"></div></div>
  <div id="nav"><div class="abs" style="left:0;top:44px;width:937px;height:10px;background:linear-gradient(#fff,#f3f3f3)"></div>
<svg class="abs" style="left:357.5999999999999px;top:14.600000000000023px" width="17" height="16.4" viewBox="0 0 17 16.4"><path d="M8.5 0L17 8H14.6V16.4H10.6V10.6H6.4V16.4H2.4V8H0Z" fill="#2e2e2e"/></svg>
<div class="t mb" style="left:326.20000000000005px;width:80px;top:34.60000000000002px;color:#333;-webkit-text-stroke:.3px #333">Début</div>
<div class="abs" style="left:402px;top:9.600000000000023px;width:71px;height:41px;border-radius:20.5px;border:1px solid #e2e2e2;border-top-color:#7c7c7c;background:#fff;box-shadow:inset 0 1px 1px rgba(0,0,0,.12)"></div>
<svg class="abs" style="left:427.5999999999999px;top:15.399999999999977px" width="18.4" height="14" viewBox="0 0 18.4 14"><path d="M.8 .4V6.6M17.6 .4V6.6M3.4 3.5H15" fill="none" stroke="#2ea0dc" stroke-width="1.2"/><path d="M2.6 3.5L5.6 1.6V5.4ZM15.8 3.5L12.8 1.6V5.4Z" fill="#2ea0dc"/><rect x="0" y="8.6" width="18.4" height="5" fill="#2ea0dc"/><path d="M2.20 9V10.6" stroke="#fff" stroke-width=".8"/><path d="M4.45 9V11.2" stroke="#fff" stroke-width=".8"/><path d="M6.70 9V10.6" stroke="#fff" stroke-width=".8"/><path d="M8.95 9V11.2" stroke="#fff" stroke-width=".8"/><path d="M11.20 9V10.6" stroke="#fff" stroke-width=".8"/><path d="M13.45 9V11.2" stroke="#fff" stroke-width=".8"/><path d="M15.70 9V10.6" stroke="#fff" stroke-width=".8"/></svg>
<div class="t mb" style="left:397.20000000000005px;width:80px;top:34.60000000000002px;color:#35a4e0;-webkit-text-stroke:.3px #35a4e0">Mesurer</div>
<svg class="abs" style="left:502px;top:12.799999999999955px" width="18" height="17" viewBox="0 0 18 17"><path d="M7.6 .4L17 3.2V5.6L12 7.6V9.4L17 8V12.2L9.6 16.4L1 13V2.6Z" fill="#45525c"/><path d="M2.6 4.4L8.6 6.4V13.8L2.6 11.6Z" fill="#fff"/><path d="M5 7L8.6 8V12L5 10.8Z" fill="#45525c"/></svg>
<div class="t mb" style="left:470.4000000000001px;width:80px;top:34.60000000000002px;color:#48535d;-webkit-text-stroke:.3px #48535d">Coupe</div>
<svg class="abs" style="left:579.2px;top:17px" width="17.4" height="12.6" viewBox="0 0 17.4 12.6"><path d="M8.7 0L16.6 2.8 8.7 5.8 .8 2.8Z" fill="#45525c"/><path d="M.2 4L8 7V12.6L.2 9.4Z" fill="#45525c"/><path d="M17.2 4L9.4 7V12.6L17.2 9.4Z" fill="#45525c"/></svg>
<div class="t mb" style="left:547.5999999999999px;width:80px;top:34.60000000000002px;color:#48535d;-webkit-text-stroke:.3px #48535d">Décomposer</div></div>
</div>

</body>
</html>
